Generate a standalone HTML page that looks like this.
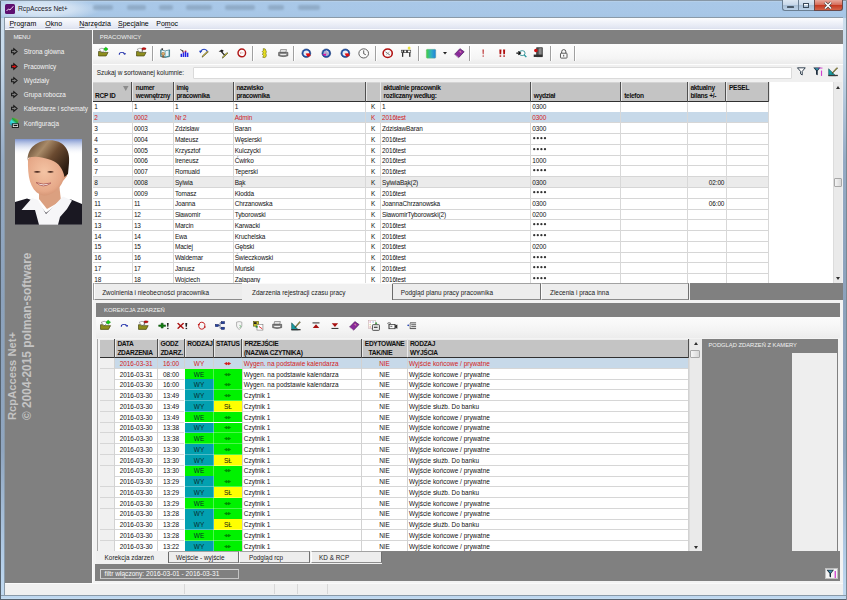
<!DOCTYPE html><html><head><meta charset="utf-8"><style>
*{margin:0;padding:0;box-sizing:border-box}
html,body{width:847px;height:600px;overflow:hidden;background:#b4cde6}
body{position:relative;font-family:"Liberation Sans",sans-serif;font-size:6.5px;color:#000}
.ab{position:absolute}
.t{position:absolute;white-space:nowrap;line-height:1}
u{text-decoration-thickness:0.6px;text-decoration-color:#707080;text-underline-offset:1px}
svg{position:absolute;overflow:visible}
</style></head><body>
<div class="ab" style="left:0.00px;top:0.00px;width:847.00px;height:600.00px;background:#56626e"></div><div class="ab" style="left:1.00px;top:1.00px;width:845.00px;height:598.00px;background:linear-gradient(180deg,#cfe0ee 0,#c6d9ea 60px,#94aac4 160px,#8ca2bc 300px,#90a6c0 450px,#b4cee8 560px,#c4dcf2 600px)"></div><div class="ab" style="left:1.00px;top:594.50px;width:845.00px;height:4.50px;background:linear-gradient(180deg,#8a9aa8 0,#8a9aa8 1px,#c0d8f0 1.2px,#bcd6ee 3px,#d0e4f4 4px,#6a7888 4.5px)"></div><div class="ab" style="left:846.00px;top:0.00px;width:1.00px;height:600.00px;background:#7a8894"></div><div class="ab" style="left:1.00px;top:1.00px;width:845.00px;height:16.50px;background:linear-gradient(180deg,#bad2ea 0,#a9c8e8 1.5px,#a8c7e7 12px,#a6c5e4 16.5px)"></div><div class="ab" style="left:1.00px;top:1.00px;width:100.00px;height:16.00px;background:radial-gradient(ellipse 60px 12px at 40px 8px,rgba(228,238,248,.95) 0,rgba(220,232,245,.75) 55%,rgba(200,220,240,0) 100%)"></div><div class="ab" style="left:0.00px;top:0.00px;width:847.00px;height:1.00px;background:#8797a6"></div><div class="ab" style="left:4.40px;top:17.00px;width:838.60px;height:578.00px;background:#8a9aa8"></div><div class="ab" style="left:93.00px;top:4.60px;width:20.00px;height:5.60px;background:#7890a8;opacity:.5;filter:blur(1.3px);border-radius:2px"></div><div class="ab" style="left:126.60px;top:4.60px;width:19.40px;height:5.60px;background:#7890a8;opacity:.5;filter:blur(1.3px);border-radius:2px"></div><div class="ab" style="left:159.30px;top:4.60px;width:14.20px;height:5.60px;background:#7890a8;opacity:.5;filter:blur(1.3px);border-radius:2px"></div><div class="ab" style="left:186.00px;top:4.60px;width:25.50px;height:5.60px;background:#7890a8;opacity:.5;filter:blur(1.3px);border-radius:2px"></div><div class="ab" style="left:224.80px;top:4.60px;width:30.00px;height:5.60px;background:#7890a8;opacity:.5;filter:blur(1.3px);border-radius:2px"></div><div class="ab" style="left:268.00px;top:4.60px;width:16.00px;height:5.60px;background:#7890a8;opacity:.5;filter:blur(1.3px);border-radius:2px"></div><div class="ab" style="left:298.00px;top:4.60px;width:22.30px;height:5.60px;background:#7890a8;opacity:.5;filter:blur(1.3px);border-radius:2px"></div><svg style="left:5px;top:4px" width="10" height="10" viewBox="0 0 10 10"><rect x="0" y="0" width="10" height="10" rx="1.5" fill="#5e1070"/><polyline points="1.5,7 3.5,5 5,6 7,3.5 8.5,2.5" fill="none" stroke="#f0d8f4" stroke-width="1"/></svg><div class="t" style="left:18.00px;top:5.90px;font-size:6.8px;color:#1a2028;letter-spacing:-0.05px">RcpAccess Net+</div><div class="ab" style="left:781.60px;top:0.00px;width:17.00px;height:11.30px;border:1px solid #6a7f93;border-top:none;border-right:none;border-radius:0 0 0 3px;background:linear-gradient(180deg,#dde8f3 0,#c9d9ea 45%,#a9c0d7 55%,#bcd2e8 100%)"></div><div class="ab" style="left:798.40px;top:0.00px;width:15.80px;height:11.30px;border:1px solid #6a7f93;border-top:none;border-right:none;background:linear-gradient(180deg,#dde8f3 0,#c9d9ea 45%,#a9c0d7 55%,#bcd2e8 100%)"></div><div class="ab" style="left:814.00px;top:0.00px;width:28.50px;height:11.30px;border:1px solid #6a4a4a;border-top:none;border-radius:0 0 3px 0;background:linear-gradient(180deg,#e9a99c 0,#d7705e 45%,#c53a22 55%,#d5654a 100%)"></div><div class="ab" style="left:787.00px;top:5.50px;width:7.00px;height:2.20px;background:#fff;border:0.6px solid #4a5a6a;border-radius:0.5px"></div><div class="ab" style="left:803.00px;top:2.50px;width:6.00px;height:5.50px;border:0.8px solid #3a4a5a;background:transparent;box-shadow:inset 0 1.2px 0 #fff"></div><svg style="left:824px;top:2px" width="8" height="7" viewBox="0 0 8 7"><path d="M1 0.5 L7 6.5 M7 0.5 L1 6.5" stroke="#404040" stroke-width="2.6"/><path d="M1 0.5 L7 6.5 M7 0.5 L1 6.5" stroke="#fff" stroke-width="1.6"/></svg><div class="ab" style="left:5.00px;top:17.50px;width:837.50px;height:577.00px;background:#f0f0f0"></div><div class="ab" style="left:5.00px;top:17.50px;width:837.50px;height:12.20px;background:linear-gradient(180deg,#fcfdfe 0,#f2f4fa 30%,#e2e6f2 80%,#dde1ee 88%,#fbfcfe 92%,#fbfcfe 100%)"></div><div class="t" style="left:9.40px;top:20.00px;font-size:7.0px;color:#000"><u>P</u>rogram</div><div class="t" style="left:45.30px;top:20.00px;font-size:7.0px;color:#000"><u>O</u>kno</div><div class="t" style="left:79.30px;top:20.00px;font-size:7.0px;color:#000"><u>N</u>arzędzia</div><div class="t" style="left:118.00px;top:20.00px;font-size:7.0px;color:#000"><u>S</u>pecjalne</div><div class="t" style="left:156.30px;top:20.00px;font-size:7.0px;color:#000">Po<u>m</u>oc</div><div class="ab" style="left:5.00px;top:29.70px;width:86.80px;height:553.10px;background:#808080"></div><div class="t" style="left:13.40px;top:34.30px;font-size:6.0px;color:#f2f2f2;letter-spacing:-0.15px">MENU</div><svg style="left:10.6px;top:48.199999999999996px" width="6.6" height="7" viewBox="0 0 6.6 7"><path d="M0.6 2.3 H2.8 V0.6 L6.1 3.5 L2.8 6.4 V4.7 H0.6 Z" fill="#808080" stroke="#151515" stroke-width="1.05" stroke-linejoin="miter"/></svg><div class="t" style="left:23.80px;top:49.20px;font-size:6.35px;color:#f4f4f4">Strona główna</div><svg style="left:10.6px;top:62.699999999999996px" width="6.6" height="7" viewBox="0 0 6.6 7"><path d="M0.6 2.3 H2.8 V0.6 L6.1 3.5 L2.8 6.4 V4.7 H0.6 Z" fill="#e01010" stroke="#151515" stroke-width="1.05" stroke-linejoin="miter"/></svg><div class="t" style="left:23.80px;top:63.70px;font-size:6.35px;color:#f4f4f4">Pracownicy</div><svg style="left:10.6px;top:76.80000000000001px" width="6.6" height="7" viewBox="0 0 6.6 7"><path d="M0.6 2.3 H2.8 V0.6 L6.1 3.5 L2.8 6.4 V4.7 H0.6 Z" fill="#808080" stroke="#151515" stroke-width="1.05" stroke-linejoin="miter"/></svg><div class="t" style="left:23.80px;top:77.80px;font-size:6.35px;color:#f4f4f4">Wydziały</div><svg style="left:10.6px;top:90.7px" width="6.6" height="7" viewBox="0 0 6.6 7"><path d="M0.6 2.3 H2.8 V0.6 L6.1 3.5 L2.8 6.4 V4.7 H0.6 Z" fill="#808080" stroke="#151515" stroke-width="1.05" stroke-linejoin="miter"/></svg><div class="t" style="left:23.80px;top:91.70px;font-size:6.35px;color:#f4f4f4">Grupa robocza</div><svg style="left:10.6px;top:105.2px" width="6.6" height="7" viewBox="0 0 6.6 7"><path d="M0.6 2.3 H2.8 V0.6 L6.1 3.5 L2.8 6.4 V4.7 H0.6 Z" fill="#808080" stroke="#151515" stroke-width="1.05" stroke-linejoin="miter"/></svg><div class="t" style="left:23.80px;top:106.20px;font-size:6.35px;color:#f4f4f4">Kalendarze i schematy</div><svg style="left:9px;top:117.2px" width="10" height="10.8" viewBox="0 0 10 10.8"><defs><linearGradient id="kg" x1="0" y1="1" x2="1" y2="0"><stop offset="0" stop-color="#1890b0"/><stop offset="0.4" stop-color="#40e0e0"/><stop offset="0.6" stop-color="#20a040"/><stop offset="1" stop-color="#c8b820"/></linearGradient></defs><path d="M0.3 6 L3.5 0.5 L6 1.2 L9.6 3 L9 6 L6 8.5 L2 8.5Z" fill="url(#kg)"/><rect x="3.3" y="6.8" width="6.2" height="3.7" fill="#f4f4f4" stroke="#101010" stroke-width="0.9"/><rect x="4.6" y="7.9" width="3.8" height="1.3" fill="#101010"/></svg><div class="t" style="left:23.80px;top:120.60px;font-size:6.35px;color:#f4f4f4">Konfiguracja</div><svg style="left:14.8px;top:138.8px" width="67" height="85.8" viewBox="0 0 67 85.8">
<defs><radialGradient id="bgp" cx="0.5" cy="0.05" r="0.6" fx="0.5" fy="0.1"><stop offset="0" stop-color="#ffffff"/><stop offset="0.5" stop-color="#f4f6fb"/><stop offset="1" stop-color="#ffffff"/></radialGradient>
<linearGradient id="bgt" x1="0" y1="0" x2="0" y2="1"><stop offset="0" stop-color="#7f96d0" stop-opacity="1"/><stop offset="1" stop-color="#ffffff" stop-opacity="0"/></linearGradient>
<linearGradient id="hair" x1="0" y1="0" x2="1" y2="0.7"><stop offset="0" stop-color="#4a3220"/><stop offset="0.35" stop-color="#a88a68"/><stop offset="0.6" stop-color="#6a4a30"/><stop offset="1" stop-color="#2a1a10"/></linearGradient>
<radialGradient id="skin" cx="0.42" cy="0.45" r="0.65"><stop offset="0" stop-color="#f4c4a4"/><stop offset="0.7" stop-color="#e6a888"/><stop offset="1" stop-color="#c88868"/></radialGradient></defs>
<rect width="67" height="85.8" fill="#fff"/>
<rect width="67" height="16" fill="url(#bgt)"/>
<path d="M24 46 L44 44 L46 62 L32 70 L24 60 Z" fill="#dba080"/>
<path d="M13 20 C12.5 38 15 50 25 55.5 C33 59 44 52 48 42 L52 37 L52 24 C45 12 24 10 13 20Z" fill="url(#skin)"/>
<path d="M12.6 22 C12 8 23 1.2 35 1.2 C48 1.2 55.5 10 54 24 L53 35 L49.5 38 C48 30 44 24 36 21 C28 18.5 20 16.5 13 19Z" fill="url(#hair)"/>
<path d="M0 63 L12 59.5 L22 63 L31 74 L45 63 L56 60.5 L67 65 V85.8 H0Z" fill="#1a1822"/>
<path d="M6.5 71 L17 59 L23 61 L31 75 L44 61.5 L48 57.5 L57 61.5 L52 70 L45 78 L43 85.8 L24 85.8 L20 71 Z" fill="#f6f6f8"/>
<path d="M18.5 33 Q22 31 26 33 Q22 34.3 18.5 33Z" fill="#4a2a20"/><path d="M32 33 Q35.5 31 39 33 Q35.5 34.3 32 33Z" fill="#4a2a20"/>
<path d="M21 43.5 Q28 50 36 44 Q28 46.5 21 43.5Z" fill="#fff" stroke="#b0605a" stroke-width="0.9"/>
</svg><div class="t" style="left:7px;top:420px;transform-origin:0 0;transform:rotate(-90deg);font-size:11.2px;font-weight:bold;color:#c4c4c4;height:10px;line-height:10px">RcpAccess Net+</div><div class="t" style="left:21.6px;top:420px;transform-origin:0 0;transform:rotate(-90deg);font-size:11.9px;font-weight:bold;color:#c4c4c4;height:10px;line-height:10px">© 2004-2015 polman-software</div><div class="ab" style="left:5.00px;top:582.80px;width:837.50px;height:11.70px;background:#f0f0f0;border-top:1px solid #fafafa"></div><div class="ab" style="left:183.60px;top:584.00px;width:0.80px;height:10.00px;background:#d8d8d8"></div><div class="ab" style="left:273.60px;top:584.00px;width:0.80px;height:10.00px;background:#d8d8d8"></div><div class="ab" style="left:297.00px;top:584.00px;width:0.80px;height:10.00px;background:#d8d8d8"></div><div class="ab" style="left:326.60px;top:584.00px;width:0.80px;height:10.00px;background:#d8d8d8"></div><div class="ab" style="left:91.80px;top:29.70px;width:1.20px;height:553.00px;background:#fbfbfb"></div><div class="ab" style="left:93.00px;top:29.70px;width:749.50px;height:14.00px;background:#808080"></div><div class="t" style="left:99.70px;top:34.10px;font-size:6.05px;color:#f0f0f0">PRACOWNICY</div><div class="ab" style="left:93.00px;top:43.70px;width:749.50px;height:20.00px;background:linear-gradient(180deg,#fdfdfd 0,#f5f5f5 70%,#ebebeb 100%)"></div><div class="ab" style="left:93.00px;top:63.70px;width:749.50px;height:18.00px;background:#f0f0f0;border-top:1px solid #fdfdfd"></div><div class="t" style="left:96.70px;top:70.30px;font-size:6.4px;color:#202020">Szukaj w sortowanej kolumnie:</div><div class="ab" style="left:193.00px;top:66.60px;width:599.00px;height:12.30px;background:#fff;border:0.7px solid #dadada;border-radius:1px"></div><div class="ab" style="left:93.00px;top:81.50px;width:740.00px;height:201.50px;background:#fff"></div><div class="ab" style="left:93.00px;top:81.70px;width:675.70px;height:20.10px;background:#c4c4c4;border-top:0.6px solid #d4d4d4;border-bottom:1px solid #303030"></div><div class="ab" style="left:131.40px;top:81.70px;width:0.90px;height:20.10px;background:#505050"></div><div class="ab" style="left:132.30px;top:81.70px;width:0.60px;height:19.10px;background:#e8e8e8"></div><div class="ab" style="left:172.80px;top:81.70px;width:0.90px;height:20.10px;background:#505050"></div><div class="ab" style="left:173.70px;top:81.70px;width:0.60px;height:19.10px;background:#e8e8e8"></div><div class="ab" style="left:232.60px;top:81.70px;width:0.90px;height:20.10px;background:#505050"></div><div class="ab" style="left:233.50px;top:81.70px;width:0.60px;height:19.10px;background:#e8e8e8"></div><div class="ab" style="left:364.90px;top:81.70px;width:0.90px;height:20.10px;background:#505050"></div><div class="ab" style="left:365.80px;top:81.70px;width:0.60px;height:19.10px;background:#e8e8e8"></div><div class="ab" style="left:379.50px;top:81.70px;width:0.90px;height:20.10px;background:#505050"></div><div class="ab" style="left:380.40px;top:81.70px;width:0.60px;height:19.10px;background:#e8e8e8"></div><div class="ab" style="left:529.80px;top:81.70px;width:0.90px;height:20.10px;background:#505050"></div><div class="ab" style="left:530.70px;top:81.70px;width:0.60px;height:19.10px;background:#e8e8e8"></div><div class="ab" style="left:619.80px;top:81.70px;width:0.90px;height:20.10px;background:#505050"></div><div class="ab" style="left:620.70px;top:81.70px;width:0.60px;height:19.10px;background:#e8e8e8"></div><div class="ab" style="left:686.70px;top:81.70px;width:0.90px;height:20.10px;background:#505050"></div><div class="ab" style="left:687.60px;top:81.70px;width:0.60px;height:19.10px;background:#e8e8e8"></div><div class="ab" style="left:725.40px;top:81.70px;width:0.90px;height:20.10px;background:#505050"></div><div class="ab" style="left:726.30px;top:81.70px;width:0.60px;height:19.10px;background:#e8e8e8"></div><div class="ab" style="left:767.80px;top:81.70px;width:0.90px;height:20.10px;background:#505050"></div><div class="ab" style="left:768.70px;top:81.70px;width:0.60px;height:19.10px;background:#e8e8e8"></div><div class="t" style="left:95.00px;top:93.20px;font-size:6.6px;font-weight:bold;color:#101010;letter-spacing:-0.3px">RCP ID</div><svg style="left:123px;top:85.5px" width="5.5" height="5" viewBox="0 0 5.5 5"><path d="M0 0 H5.5 L2.75 5Z" fill="#8a8a8a"/></svg><div class="t" style="left:135.70px;top:85.20px;font-size:6.6px;font-weight:bold;color:#101010;letter-spacing:-0.3px">numer</div><div class="t" style="left:135.70px;top:93.20px;font-size:6.6px;font-weight:bold;color:#101010;letter-spacing:-0.3px">wewnętrzny</div><div class="t" style="left:176.40px;top:85.20px;font-size:6.6px;font-weight:bold;color:#101010;letter-spacing:-0.3px">imię</div><div class="t" style="left:176.40px;top:93.20px;font-size:6.6px;font-weight:bold;color:#101010;letter-spacing:-0.3px">pracownika</div><div class="t" style="left:236.40px;top:85.20px;font-size:6.6px;font-weight:bold;color:#101010;letter-spacing:-0.3px">nazwisko</div><div class="t" style="left:236.40px;top:93.20px;font-size:6.6px;font-weight:bold;color:#101010;letter-spacing:-0.3px">pracownika</div><div class="t" style="left:383.40px;top:85.20px;font-size:6.6px;font-weight:bold;color:#101010;letter-spacing:-0.3px">aktualnie pracownik</div><div class="t" style="left:383.40px;top:93.20px;font-size:6.6px;font-weight:bold;color:#101010;letter-spacing:-0.3px">rozliczany według:</div><div class="t" style="left:533.80px;top:93.20px;font-size:6.6px;font-weight:bold;color:#101010;letter-spacing:-0.3px">wydział</div><div class="t" style="left:624.20px;top:93.20px;font-size:6.6px;font-weight:bold;color:#101010;letter-spacing:-0.3px">telefon</div><div class="t" style="left:690.40px;top:85.20px;font-size:6.6px;font-weight:bold;color:#101010;letter-spacing:-0.3px">aktualny</div><div class="t" style="left:690.40px;top:93.20px;font-size:6.6px;font-weight:bold;color:#101010;letter-spacing:-0.3px">bilans +/-</div><div class="t" style="left:729.00px;top:85.20px;font-size:6.6px;font-weight:bold;color:#101010;letter-spacing:-0.3px">PESEL</div><div class="ab" style="left:93.00px;top:111.60px;width:675.70px;height:0.80px;background:#d6d6d6"></div><div class="t" style="left:94.20px;top:104.43px;font-size:6.45px;letter-spacing:-0.12px;color:#101010">1</div><div class="t" style="left:133.90px;top:104.43px;font-size:6.45px;letter-spacing:-0.12px;color:#101010">1</div><div class="t" style="left:174.90px;top:104.43px;font-size:6.45px;letter-spacing:-0.12px;color:#101010">1</div><div class="t" style="left:234.70px;top:104.43px;font-size:6.45px;letter-spacing:-0.12px;color:#101010">1</div><div class="t" style="left:365.80px;width:14.60px;text-align:center;top:104.43px;font-size:6.45px;letter-spacing:-0.12px;color:#101010">K</div><div class="t" style="left:382.00px;top:104.43px;font-size:6.45px;letter-spacing:-0.12px;color:#101010">1</div><div class="t" style="left:532.30px;top:104.43px;font-size:6.45px;letter-spacing:-0.12px;color:#101010">0300</div><div class="ab" style="left:93.00px;top:112.40px;width:675.70px;height:10.77px;background:#c7d9e9"></div><div class="ab" style="left:93.00px;top:122.37px;width:675.70px;height:0.80px;background:#d6d6d6"></div><div class="t" style="left:94.20px;top:115.20px;font-size:6.45px;letter-spacing:-0.12px;color:#d42020">2</div><div class="t" style="left:133.90px;top:115.20px;font-size:6.45px;letter-spacing:-0.12px;color:#d42020">0002</div><div class="t" style="left:174.90px;top:115.20px;font-size:6.45px;letter-spacing:-0.12px;color:#d42020">Nr 2</div><div class="t" style="left:234.70px;top:115.20px;font-size:6.45px;letter-spacing:-0.12px;color:#d42020">Admin</div><div class="t" style="left:365.80px;width:14.60px;text-align:center;top:115.20px;font-size:6.45px;letter-spacing:-0.12px;color:#d42020">K</div><div class="t" style="left:382.00px;top:115.20px;font-size:6.45px;letter-spacing:-0.12px;color:#d42020">2016test</div><div class="t" style="left:532.30px;top:115.20px;font-size:6.45px;letter-spacing:-0.12px;color:#d42020">0300</div><div class="ab" style="left:93.00px;top:133.14px;width:675.70px;height:0.80px;background:#d6d6d6"></div><div class="t" style="left:94.20px;top:125.97px;font-size:6.45px;letter-spacing:-0.12px;color:#101010">3</div><div class="t" style="left:133.90px;top:125.97px;font-size:6.45px;letter-spacing:-0.12px;color:#101010">0003</div><div class="t" style="left:174.90px;top:125.97px;font-size:6.45px;letter-spacing:-0.12px;color:#101010">Zdzisław</div><div class="t" style="left:234.70px;top:125.97px;font-size:6.45px;letter-spacing:-0.12px;color:#101010">Baran</div><div class="t" style="left:365.80px;width:14.60px;text-align:center;top:125.97px;font-size:6.45px;letter-spacing:-0.12px;color:#101010">K</div><div class="t" style="left:382.00px;top:125.97px;font-size:6.45px;letter-spacing:-0.12px;color:#101010">ZdzisławBaran</div><div class="t" style="left:532.30px;top:125.97px;font-size:6.45px;letter-spacing:-0.12px;color:#101010">0300</div><div class="ab" style="left:93.00px;top:143.91px;width:675.70px;height:0.80px;background:#d6d6d6"></div><div class="t" style="left:94.20px;top:136.74px;font-size:6.45px;letter-spacing:-0.12px;color:#101010">4</div><div class="t" style="left:133.90px;top:136.74px;font-size:6.45px;letter-spacing:-0.12px;color:#101010">0004</div><div class="t" style="left:174.90px;top:136.74px;font-size:6.45px;letter-spacing:-0.12px;color:#101010">Mateusz</div><div class="t" style="left:234.70px;top:136.74px;font-size:6.45px;letter-spacing:-0.12px;color:#101010">Węsierski</div><div class="t" style="left:365.80px;width:14.60px;text-align:center;top:136.74px;font-size:6.45px;letter-spacing:-0.12px;color:#101010">K</div><div class="t" style="left:382.00px;top:136.74px;font-size:6.45px;letter-spacing:-0.12px;color:#101010">2016test</div><svg style="left:532.60px;top:137.14px" width="14" height="2.6" viewBox="0 0 14 2.6"><g fill="#333"><circle cx="1.2" cy="1.2" r="1.15"/><circle cx="4.8" cy="1.2" r="1.15"/><circle cx="8.4" cy="1.2" r="1.15"/><circle cx="12" cy="1.2" r="1.15"/></g></svg><div class="ab" style="left:93.00px;top:154.68px;width:675.70px;height:0.80px;background:#d6d6d6"></div><div class="t" style="left:94.20px;top:147.51px;font-size:6.45px;letter-spacing:-0.12px;color:#101010">5</div><div class="t" style="left:133.90px;top:147.51px;font-size:6.45px;letter-spacing:-0.12px;color:#101010">0005</div><div class="t" style="left:174.90px;top:147.51px;font-size:6.45px;letter-spacing:-0.12px;color:#101010">Krzysztof</div><div class="t" style="left:234.70px;top:147.51px;font-size:6.45px;letter-spacing:-0.12px;color:#101010">Kulczycki</div><div class="t" style="left:365.80px;width:14.60px;text-align:center;top:147.51px;font-size:6.45px;letter-spacing:-0.12px;color:#101010">K</div><div class="t" style="left:382.00px;top:147.51px;font-size:6.45px;letter-spacing:-0.12px;color:#101010">2016test</div><svg style="left:532.60px;top:147.91px" width="14" height="2.6" viewBox="0 0 14 2.6"><g fill="#333"><circle cx="1.2" cy="1.2" r="1.15"/><circle cx="4.8" cy="1.2" r="1.15"/><circle cx="8.4" cy="1.2" r="1.15"/><circle cx="12" cy="1.2" r="1.15"/></g></svg><div class="ab" style="left:93.00px;top:165.45px;width:675.70px;height:0.80px;background:#d6d6d6"></div><div class="t" style="left:94.20px;top:158.28px;font-size:6.45px;letter-spacing:-0.12px;color:#101010">6</div><div class="t" style="left:133.90px;top:158.28px;font-size:6.45px;letter-spacing:-0.12px;color:#101010">0006</div><div class="t" style="left:174.90px;top:158.28px;font-size:6.45px;letter-spacing:-0.12px;color:#101010">Ireneusz</div><div class="t" style="left:234.70px;top:158.28px;font-size:6.45px;letter-spacing:-0.12px;color:#101010">Ćwirko</div><div class="t" style="left:365.80px;width:14.60px;text-align:center;top:158.28px;font-size:6.45px;letter-spacing:-0.12px;color:#101010">K</div><div class="t" style="left:382.00px;top:158.28px;font-size:6.45px;letter-spacing:-0.12px;color:#101010">2016test</div><div class="t" style="left:532.30px;top:158.28px;font-size:6.45px;letter-spacing:-0.12px;color:#101010">1000</div><div class="ab" style="left:93.00px;top:176.22px;width:675.70px;height:0.80px;background:#d6d6d6"></div><div class="t" style="left:94.20px;top:169.05px;font-size:6.45px;letter-spacing:-0.12px;color:#101010">7</div><div class="t" style="left:133.90px;top:169.05px;font-size:6.45px;letter-spacing:-0.12px;color:#101010">0007</div><div class="t" style="left:174.90px;top:169.05px;font-size:6.45px;letter-spacing:-0.12px;color:#101010">Romuald</div><div class="t" style="left:234.70px;top:169.05px;font-size:6.45px;letter-spacing:-0.12px;color:#101010">Teperski</div><div class="t" style="left:365.80px;width:14.60px;text-align:center;top:169.05px;font-size:6.45px;letter-spacing:-0.12px;color:#101010">K</div><div class="t" style="left:382.00px;top:169.05px;font-size:6.45px;letter-spacing:-0.12px;color:#101010">2016test</div><svg style="left:532.60px;top:169.45px" width="14" height="2.6" viewBox="0 0 14 2.6"><g fill="#333"><circle cx="1.2" cy="1.2" r="1.15"/><circle cx="4.8" cy="1.2" r="1.15"/><circle cx="8.4" cy="1.2" r="1.15"/><circle cx="12" cy="1.2" r="1.15"/></g></svg><div class="ab" style="left:93.00px;top:177.02px;width:675.70px;height:10.77px;background:#ebebeb"></div><div class="ab" style="left:93.00px;top:186.99px;width:675.70px;height:0.80px;background:#d6d6d6"></div><div class="t" style="left:94.20px;top:179.82px;font-size:6.45px;letter-spacing:-0.12px;color:#101010">8</div><div class="t" style="left:133.90px;top:179.82px;font-size:6.45px;letter-spacing:-0.12px;color:#101010">0008</div><div class="t" style="left:174.90px;top:179.82px;font-size:6.45px;letter-spacing:-0.12px;color:#101010">Sylwia</div><div class="t" style="left:234.70px;top:179.82px;font-size:6.45px;letter-spacing:-0.12px;color:#101010">Bąk</div><div class="t" style="left:365.80px;width:14.60px;text-align:center;top:179.82px;font-size:6.45px;letter-spacing:-0.12px;color:#101010">K</div><div class="t" style="left:382.00px;top:179.82px;font-size:6.45px;letter-spacing:-0.12px;color:#101010">SylwiaBąk(2)</div><div class="t" style="left:532.30px;top:179.82px;font-size:6.45px;letter-spacing:-0.12px;color:#101010">0300</div><div class="t" style="right:122.70px;top:179.82px;font-size:6.45px;letter-spacing:-0.12px;color:#101010">02:00</div><div class="ab" style="left:93.00px;top:197.76px;width:675.70px;height:0.80px;background:#d6d6d6"></div><div class="t" style="left:94.20px;top:190.59px;font-size:6.45px;letter-spacing:-0.12px;color:#101010">9</div><div class="t" style="left:133.90px;top:190.59px;font-size:6.45px;letter-spacing:-0.12px;color:#101010">0009</div><div class="t" style="left:174.90px;top:190.59px;font-size:6.45px;letter-spacing:-0.12px;color:#101010">Tomasz</div><div class="t" style="left:234.70px;top:190.59px;font-size:6.45px;letter-spacing:-0.12px;color:#101010">Kłodda</div><div class="t" style="left:365.80px;width:14.60px;text-align:center;top:190.59px;font-size:6.45px;letter-spacing:-0.12px;color:#101010">K</div><div class="t" style="left:382.00px;top:190.59px;font-size:6.45px;letter-spacing:-0.12px;color:#101010">2016test</div><svg style="left:532.60px;top:190.99px" width="14" height="2.6" viewBox="0 0 14 2.6"><g fill="#333"><circle cx="1.2" cy="1.2" r="1.15"/><circle cx="4.8" cy="1.2" r="1.15"/><circle cx="8.4" cy="1.2" r="1.15"/><circle cx="12" cy="1.2" r="1.15"/></g></svg><div class="ab" style="left:93.00px;top:208.53px;width:675.70px;height:0.80px;background:#d6d6d6"></div><div class="t" style="left:94.20px;top:201.36px;font-size:6.45px;letter-spacing:-0.12px;color:#101010">11</div><div class="t" style="left:133.90px;top:201.36px;font-size:6.45px;letter-spacing:-0.12px;color:#101010">11</div><div class="t" style="left:174.90px;top:201.36px;font-size:6.45px;letter-spacing:-0.12px;color:#101010">Joanna</div><div class="t" style="left:234.70px;top:201.36px;font-size:6.45px;letter-spacing:-0.12px;color:#101010">Chrzanowska</div><div class="t" style="left:365.80px;width:14.60px;text-align:center;top:201.36px;font-size:6.45px;letter-spacing:-0.12px;color:#101010">K</div><div class="t" style="left:382.00px;top:201.36px;font-size:6.45px;letter-spacing:-0.12px;color:#101010">JoannaChrzanowska</div><div class="t" style="left:532.30px;top:201.36px;font-size:6.45px;letter-spacing:-0.12px;color:#101010">0300</div><div class="t" style="right:122.70px;top:201.36px;font-size:6.45px;letter-spacing:-0.12px;color:#101010">06:00</div><div class="ab" style="left:93.00px;top:219.30px;width:675.70px;height:0.80px;background:#d6d6d6"></div><div class="t" style="left:94.20px;top:212.13px;font-size:6.45px;letter-spacing:-0.12px;color:#101010">12</div><div class="t" style="left:133.90px;top:212.13px;font-size:6.45px;letter-spacing:-0.12px;color:#101010">12</div><div class="t" style="left:174.90px;top:212.13px;font-size:6.45px;letter-spacing:-0.12px;color:#101010">Sławomir</div><div class="t" style="left:234.70px;top:212.13px;font-size:6.45px;letter-spacing:-0.12px;color:#101010">Tyborowski</div><div class="t" style="left:365.80px;width:14.60px;text-align:center;top:212.13px;font-size:6.45px;letter-spacing:-0.12px;color:#101010">K</div><div class="t" style="left:382.00px;top:212.13px;font-size:6.45px;letter-spacing:-0.12px;color:#101010">SławomirTyborowski(2)</div><div class="t" style="left:532.30px;top:212.13px;font-size:6.45px;letter-spacing:-0.12px;color:#101010">0200</div><div class="ab" style="left:93.00px;top:230.07px;width:675.70px;height:0.80px;background:#d6d6d6"></div><div class="t" style="left:94.20px;top:222.90px;font-size:6.45px;letter-spacing:-0.12px;color:#101010">13</div><div class="t" style="left:133.90px;top:222.90px;font-size:6.45px;letter-spacing:-0.12px;color:#101010">13</div><div class="t" style="left:174.90px;top:222.90px;font-size:6.45px;letter-spacing:-0.12px;color:#101010">Marcin</div><div class="t" style="left:234.70px;top:222.90px;font-size:6.45px;letter-spacing:-0.12px;color:#101010">Karwacki</div><div class="t" style="left:365.80px;width:14.60px;text-align:center;top:222.90px;font-size:6.45px;letter-spacing:-0.12px;color:#101010">K</div><div class="t" style="left:382.00px;top:222.90px;font-size:6.45px;letter-spacing:-0.12px;color:#101010">2016test</div><svg style="left:532.60px;top:223.30px" width="14" height="2.6" viewBox="0 0 14 2.6"><g fill="#333"><circle cx="1.2" cy="1.2" r="1.15"/><circle cx="4.8" cy="1.2" r="1.15"/><circle cx="8.4" cy="1.2" r="1.15"/><circle cx="12" cy="1.2" r="1.15"/></g></svg><div class="ab" style="left:93.00px;top:240.84px;width:675.70px;height:0.80px;background:#d6d6d6"></div><div class="t" style="left:94.20px;top:233.67px;font-size:6.45px;letter-spacing:-0.12px;color:#101010">14</div><div class="t" style="left:133.90px;top:233.67px;font-size:6.45px;letter-spacing:-0.12px;color:#101010">14</div><div class="t" style="left:174.90px;top:233.67px;font-size:6.45px;letter-spacing:-0.12px;color:#101010">Ewa</div><div class="t" style="left:234.70px;top:233.67px;font-size:6.45px;letter-spacing:-0.12px;color:#101010">Kruchelska</div><div class="t" style="left:365.80px;width:14.60px;text-align:center;top:233.67px;font-size:6.45px;letter-spacing:-0.12px;color:#101010">K</div><div class="t" style="left:382.00px;top:233.67px;font-size:6.45px;letter-spacing:-0.12px;color:#101010">2016test</div><svg style="left:532.60px;top:234.07px" width="14" height="2.6" viewBox="0 0 14 2.6"><g fill="#333"><circle cx="1.2" cy="1.2" r="1.15"/><circle cx="4.8" cy="1.2" r="1.15"/><circle cx="8.4" cy="1.2" r="1.15"/><circle cx="12" cy="1.2" r="1.15"/></g></svg><div class="ab" style="left:93.00px;top:251.61px;width:675.70px;height:0.80px;background:#d6d6d6"></div><div class="t" style="left:94.20px;top:244.44px;font-size:6.45px;letter-spacing:-0.12px;color:#101010">15</div><div class="t" style="left:133.90px;top:244.44px;font-size:6.45px;letter-spacing:-0.12px;color:#101010">15</div><div class="t" style="left:174.90px;top:244.44px;font-size:6.45px;letter-spacing:-0.12px;color:#101010">Maciej</div><div class="t" style="left:234.70px;top:244.44px;font-size:6.45px;letter-spacing:-0.12px;color:#101010">Gębski</div><div class="t" style="left:365.80px;width:14.60px;text-align:center;top:244.44px;font-size:6.45px;letter-spacing:-0.12px;color:#101010">K</div><div class="t" style="left:382.00px;top:244.44px;font-size:6.45px;letter-spacing:-0.12px;color:#101010">2016test</div><div class="t" style="left:532.30px;top:244.44px;font-size:6.45px;letter-spacing:-0.12px;color:#101010">0200</div><div class="ab" style="left:93.00px;top:262.38px;width:675.70px;height:0.80px;background:#d6d6d6"></div><div class="t" style="left:94.20px;top:255.21px;font-size:6.45px;letter-spacing:-0.12px;color:#101010">16</div><div class="t" style="left:133.90px;top:255.21px;font-size:6.45px;letter-spacing:-0.12px;color:#101010">16</div><div class="t" style="left:174.90px;top:255.21px;font-size:6.45px;letter-spacing:-0.12px;color:#101010">Waldemar</div><div class="t" style="left:234.70px;top:255.21px;font-size:6.45px;letter-spacing:-0.12px;color:#101010">Świeczkowski</div><div class="t" style="left:365.80px;width:14.60px;text-align:center;top:255.21px;font-size:6.45px;letter-spacing:-0.12px;color:#101010">K</div><div class="t" style="left:382.00px;top:255.21px;font-size:6.45px;letter-spacing:-0.12px;color:#101010">2016test</div><svg style="left:532.60px;top:255.61px" width="14" height="2.6" viewBox="0 0 14 2.6"><g fill="#333"><circle cx="1.2" cy="1.2" r="1.15"/><circle cx="4.8" cy="1.2" r="1.15"/><circle cx="8.4" cy="1.2" r="1.15"/><circle cx="12" cy="1.2" r="1.15"/></g></svg><div class="ab" style="left:93.00px;top:273.15px;width:675.70px;height:0.80px;background:#d6d6d6"></div><div class="t" style="left:94.20px;top:265.98px;font-size:6.45px;letter-spacing:-0.12px;color:#101010">17</div><div class="t" style="left:133.90px;top:265.98px;font-size:6.45px;letter-spacing:-0.12px;color:#101010">17</div><div class="t" style="left:174.90px;top:265.98px;font-size:6.45px;letter-spacing:-0.12px;color:#101010">Janusz</div><div class="t" style="left:234.70px;top:265.98px;font-size:6.45px;letter-spacing:-0.12px;color:#101010">Muński</div><div class="t" style="left:365.80px;width:14.60px;text-align:center;top:265.98px;font-size:6.45px;letter-spacing:-0.12px;color:#101010">K</div><div class="t" style="left:382.00px;top:265.98px;font-size:6.45px;letter-spacing:-0.12px;color:#101010">2016test</div><svg style="left:532.60px;top:266.38px" width="14" height="2.6" viewBox="0 0 14 2.6"><g fill="#333"><circle cx="1.2" cy="1.2" r="1.15"/><circle cx="4.8" cy="1.2" r="1.15"/><circle cx="8.4" cy="1.2" r="1.15"/><circle cx="12" cy="1.2" r="1.15"/></g></svg><div class="ab" style="left:93.00px;top:283.92px;width:675.70px;height:0.80px;background:#d6d6d6"></div><div class="t" style="left:94.20px;top:276.75px;font-size:6.45px;letter-spacing:-0.12px;color:#101010">18</div><div class="t" style="left:133.90px;top:276.75px;font-size:6.45px;letter-spacing:-0.12px;color:#101010">18</div><div class="t" style="left:174.90px;top:276.75px;font-size:6.45px;letter-spacing:-0.12px;color:#101010">Wojciech</div><div class="t" style="left:234.70px;top:276.75px;font-size:6.45px;letter-spacing:-0.12px;color:#101010">Zalapany</div><div class="t" style="left:365.80px;width:14.60px;text-align:center;top:276.75px;font-size:6.45px;letter-spacing:-0.12px;color:#101010">K</div><div class="t" style="left:382.00px;top:276.75px;font-size:6.45px;letter-spacing:-0.12px;color:#101010">2016test</div><svg style="left:532.60px;top:277.15px" width="14" height="2.6" viewBox="0 0 14 2.6"><g fill="#333"><circle cx="1.2" cy="1.2" r="1.15"/><circle cx="4.8" cy="1.2" r="1.15"/><circle cx="8.4" cy="1.2" r="1.15"/><circle cx="12" cy="1.2" r="1.15"/></g></svg><div class="ab" style="left:131.60px;top:101.80px;width:0.70px;height:181.50px;background:#d8d8d8"></div><div class="ab" style="left:173.00px;top:101.80px;width:0.70px;height:181.50px;background:#d8d8d8"></div><div class="ab" style="left:232.80px;top:101.80px;width:0.70px;height:181.50px;background:#d8d8d8"></div><div class="ab" style="left:365.10px;top:101.80px;width:0.70px;height:181.50px;background:#d8d8d8"></div><div class="ab" style="left:379.70px;top:101.80px;width:0.70px;height:181.50px;background:#d8d8d8"></div><div class="ab" style="left:530.00px;top:101.80px;width:0.70px;height:181.50px;background:#d8d8d8"></div><div class="ab" style="left:620.00px;top:101.80px;width:0.70px;height:181.50px;background:#d8d8d8"></div><div class="ab" style="left:686.90px;top:101.80px;width:0.70px;height:181.50px;background:#d8d8d8"></div><div class="ab" style="left:725.60px;top:101.80px;width:0.70px;height:181.50px;background:#d8d8d8"></div><div class="ab" style="left:768.00px;top:101.80px;width:0.70px;height:181.50px;background:#d8d8d8"></div><div class="ab" style="left:833.00px;top:81.50px;width:9.00px;height:201.00px;background:#eaeaea;border-left:0.7px solid #dcdcdc"></div><svg style="left:835.5px;top:86px" width="4" height="3" viewBox="0 0 4 3"><path d="M0 3 L2 0 L4 3Z" fill="#303030"/></svg><svg style="left:835.5px;top:277px" width="4" height="3" viewBox="0 0 4 3"><path d="M0 0 L2 3 L4 0Z" fill="#303030"/></svg><div class="ab" style="left:833.50px;top:178.00px;width:8.20px;height:8.70px;background:linear-gradient(90deg,#f4f4f4,#d8d8d8);border:0.7px solid #a8a8a8;border-radius:1px"></div><div class="ab" style="left:93.00px;top:282.80px;width:749.50px;height:17.00px;background:#808080"></div><div class="ab" style="left:93.00px;top:282.80px;width:596.50px;height:17.00px;background:#f0f0f0"></div><div class="ab" style="left:93.00px;top:283.20px;width:1.00px;height:16.60px;background:#a0a0a0"></div><div class="ab" style="left:94.00px;top:283.20px;width:148.00px;height:16.80px;background:#ededed;border-top:1.3px solid #a2a2a2;border-left:0.8px solid #fdfdfd;border-bottom:1.2px solid #8c8c8c"></div><div class="t" style="left:102.20px;top:289.50px;font-size:6.4px;color:#1a1a1a">Zwolnienia i nieobecności pracownika</div><div class="ab" style="left:242.00px;top:283.20px;width:150.30px;height:16.80px;background:#f0f0f0"></div><div class="t" style="left:252.00px;top:289.50px;font-size:6.4px;color:#1a1a1a">Zdarzenia rejestracji czasu pracy</div><div class="ab" style="left:392.30px;top:283.20px;width:148.50px;height:16.80px;background:#ededed;border-top:1.3px solid #a2a2a2;border-left:0.8px solid #fdfdfd;border-right:1px solid #707070;border-bottom:1.2px solid #8c8c8c"></div><div class="t" style="left:400.70px;top:289.50px;font-size:6.4px;color:#1a1a1a">Podgląd planu pracy pracownika</div><div class="ab" style="left:540.80px;top:283.20px;width:148.70px;height:16.80px;background:#ededed;border-top:1.3px solid #a2a2a2;border-left:0.8px solid #fdfdfd;border-right:1px solid #707070;border-bottom:1.2px solid #8c8c8c"></div><div class="t" style="left:550.00px;top:289.50px;font-size:6.4px;color:#1a1a1a">Zlecenia i praca inna</div><div class="ab" style="left:392.10px;top:284.00px;width:1.00px;height:16.00px;background:#6a6a6a"></div><div class="ab" style="left:242.00px;top:283.20px;width:150.30px;height:1.20px;background:#fafafa"></div><div class="ab" style="left:93.00px;top:300.00px;width:749.50px;height:283.00px;background:#f3f3f3"></div><div class="ab" style="left:95.60px;top:303.00px;width:744.60px;height:13.90px;background:#808080"></div><div class="t" style="left:104.00px;top:307.80px;font-size:5.9px;color:#f4f4f4">KOREKCJA ZDARZEŃ</div><div class="ab" style="left:95.60px;top:316.90px;width:744.60px;height:21.60px;background:linear-gradient(180deg,#fcfcfc 0,#f4f4f4 60%,#ececec 100%)"></div><div class="ab" style="left:97.20px;top:338.50px;width:0.80px;height:212.50px;background:#a8a8a8"></div><div class="ab" style="left:99.80px;top:358.00px;width:589.20px;height:193.00px;background:#fff"></div><div class="ab" style="left:99.80px;top:338.50px;width:589.20px;height:19.50px;background:#c4c4c4;border-top:0.6px solid #eeeeee;border-bottom:1.1px solid #303030"></div><div class="ab" style="left:113.70px;top:338.50px;width:0.90px;height:19.50px;background:#505050"></div><div class="ab" style="left:114.60px;top:338.50px;width:0.60px;height:18.50px;background:#e8e8e8"></div><div class="ab" style="left:156.70px;top:338.50px;width:0.90px;height:19.50px;background:#505050"></div><div class="ab" style="left:157.60px;top:338.50px;width:0.60px;height:18.50px;background:#e8e8e8"></div><div class="ab" style="left:183.60px;top:338.50px;width:0.90px;height:19.50px;background:#505050"></div><div class="ab" style="left:184.50px;top:338.50px;width:0.60px;height:18.50px;background:#e8e8e8"></div><div class="ab" style="left:212.60px;top:338.50px;width:0.90px;height:19.50px;background:#505050"></div><div class="ab" style="left:213.50px;top:338.50px;width:0.60px;height:18.50px;background:#e8e8e8"></div><div class="ab" style="left:241.30px;top:338.50px;width:0.90px;height:19.50px;background:#505050"></div><div class="ab" style="left:242.20px;top:338.50px;width:0.60px;height:18.50px;background:#e8e8e8"></div><div class="ab" style="left:360.70px;top:338.50px;width:0.90px;height:19.50px;background:#505050"></div><div class="ab" style="left:361.60px;top:338.50px;width:0.60px;height:18.50px;background:#e8e8e8"></div><div class="ab" style="left:406.50px;top:338.50px;width:0.90px;height:19.50px;background:#505050"></div><div class="ab" style="left:407.40px;top:338.50px;width:0.60px;height:18.50px;background:#e8e8e8"></div><div class="ab" style="left:688.10px;top:338.50px;width:0.90px;height:19.50px;background:#505050"></div><div class="ab" style="left:689.00px;top:338.50px;width:0.60px;height:18.50px;background:#e8e8e8"></div><div class="t" style="left:117.40px;top:341.20px;font-size:6.6px;font-weight:bold;color:#101010;letter-spacing:-0.3px">DATA</div><div class="t" style="left:117.40px;top:349.60px;font-size:6.6px;font-weight:bold;color:#101010;letter-spacing:-0.3px">ZDARZENIA</div><div class="t" style="left:160.40px;top:341.20px;font-size:6.6px;font-weight:bold;color:#101010;letter-spacing:-0.3px">GODZ</div><div class="t" style="left:160.40px;top:349.60px;font-size:6.6px;font-weight:bold;color:#101010;letter-spacing:-0.3px">ZDARZ.</div><div class="t" style="left:187.30px;top:341.20px;font-size:6.6px;font-weight:bold;color:#101010;letter-spacing:-0.3px">RODZAJ</div><div class="t" style="left:216.00px;top:341.20px;font-size:6.6px;font-weight:bold;color:#101010;letter-spacing:-0.3px">STATUS</div><div class="t" style="left:244.50px;top:341.20px;font-size:6.6px;font-weight:bold;color:#101010;letter-spacing:-0.3px">PRZEJŚCIE</div><div class="t" style="left:243.90px;top:349.60px;font-size:6.6px;font-weight:bold;color:#101010;letter-spacing:-0.3px">(NAZWA CZYTNIKA)</div><div class="t" style="left:364.80px;top:341.20px;font-size:6.6px;font-weight:bold;color:#101010;letter-spacing:-0.3px">EDYTOWANE</div><div class="t" style="left:368.60px;top:349.60px;font-size:6.6px;font-weight:bold;color:#101010;letter-spacing:-0.3px">TAK/NIE</div><div class="t" style="left:409.90px;top:341.20px;font-size:6.6px;font-weight:bold;color:#101010;letter-spacing:-0.3px">RODZAJ</div><div class="t" style="left:409.90px;top:349.60px;font-size:6.6px;font-weight:bold;color:#101010;letter-spacing:-0.3px">WYJŚCIA</div><div class="ab" style="left:114.60px;top:358.00px;width:574.40px;height:10.70px;background:#c7d9e9"></div><div class="ab" style="left:99.80px;top:358.00px;width:14.80px;height:10.70px;background:#f0f0f0"></div><div class="ab" style="left:99.80px;top:367.90px;width:589.20px;height:0.80px;background:#d6d6d6"></div><div class="t" style="left:114.60px;width:43.00px;text-align:center;top:360.75px;font-size:6.45px;color:#d42020">2016-03-31</div><div class="t" style="left:157.60px;width:26.90px;text-align:center;top:360.75px;font-size:6.45px;color:#d42020">16:00</div><div class="t" style="left:184.50px;width:29.00px;text-align:center;top:360.75px;font-size:6.45px;color:#d42020">WY</div><svg style="left:224.25px;top:361.75px" width="7.2" height="3.2" viewBox="0 0 7.2 3.2"><path d="M0 1.6 L2.8 0 L3.6 1.2 L4.4 0 L7.2 1.6 L4.4 3.2 L3.6 2 L2.8 3.2Z" fill="#d42020"/></svg><div class="t" style="left:243.80px;top:360.75px;font-size:6.45px;color:#d42020">Wygen. na podstawie kalendarza</div><div class="t" style="left:361.60px;width:45.80px;text-align:center;top:360.75px;font-size:6.45px;color:#d42020">NIE</div><div class="t" style="left:409.00px;top:360.75px;font-size:6.45px;color:#d42020">Wyjście końcowe / prywatne</div><div class="ab" style="left:184.50px;top:368.70px;width:29.00px;height:10.76px;background:#00f200"></div><div class="ab" style="left:213.50px;top:368.70px;width:28.70px;height:10.76px;background:#00f200"></div><div class="ab" style="left:99.80px;top:368.70px;width:14.80px;height:10.76px;background:#f0f0f0"></div><div class="ab" style="left:99.80px;top:378.66px;width:84.70px;height:0.80px;background:#d6d6d6"></div><div class="ab" style="left:242.20px;top:378.66px;width:446.80px;height:0.80px;background:#d6d6d6"></div><div class="ab" style="left:184.50px;top:378.66px;width:57.70px;height:0.90px;background:rgba(255,255,255,.3)"></div><div class="t" style="left:114.60px;width:43.00px;text-align:center;top:371.50px;font-size:6.45px;color:#101010">2016-03-31</div><div class="t" style="left:157.60px;width:26.90px;text-align:center;top:371.50px;font-size:6.45px;color:#101010">08:00</div><div class="t" style="left:184.50px;width:29.00px;text-align:center;top:371.50px;font-size:6.45px;color:#101010;color:#0a2a2a">WE</div><svg style="left:224.25px;top:372.50px" width="7.2" height="3.2" viewBox="0 0 7.2 3.2"><path d="M0 1.6 L2.8 0 L3.6 1.2 L4.4 0 L7.2 1.6 L4.4 3.2 L3.6 2 L2.8 3.2Z" fill="#008a00"/></svg><div class="t" style="left:243.80px;top:371.50px;font-size:6.45px;color:#101010">Wygen. na podstawie kalendarza</div><div class="t" style="left:361.60px;width:45.80px;text-align:center;top:371.50px;font-size:6.45px;color:#101010">NIE</div><div class="t" style="left:409.00px;top:371.50px;font-size:6.45px;color:#101010">Wyjście końcowe / prywatne</div><div class="ab" style="left:184.50px;top:379.46px;width:29.00px;height:10.76px;background:#02a0b0"></div><div class="ab" style="left:213.50px;top:379.46px;width:28.70px;height:10.76px;background:#00f200"></div><div class="ab" style="left:99.80px;top:379.46px;width:14.80px;height:10.76px;background:#f0f0f0"></div><div class="ab" style="left:99.80px;top:389.42px;width:84.70px;height:0.80px;background:#d6d6d6"></div><div class="ab" style="left:242.20px;top:389.42px;width:446.80px;height:0.80px;background:#d6d6d6"></div><div class="ab" style="left:184.50px;top:389.42px;width:57.70px;height:0.90px;background:rgba(255,255,255,.3)"></div><div class="t" style="left:114.60px;width:43.00px;text-align:center;top:382.26px;font-size:6.45px;color:#101010">2016-03-30</div><div class="t" style="left:157.60px;width:26.90px;text-align:center;top:382.26px;font-size:6.45px;color:#101010">16:00</div><div class="t" style="left:184.50px;width:29.00px;text-align:center;top:382.26px;font-size:6.45px;color:#101010;color:#0a2a2a">WY</div><svg style="left:224.25px;top:383.26px" width="7.2" height="3.2" viewBox="0 0 7.2 3.2"><path d="M0 1.6 L2.8 0 L3.6 1.2 L4.4 0 L7.2 1.6 L4.4 3.2 L3.6 2 L2.8 3.2Z" fill="#008a00"/></svg><div class="t" style="left:243.80px;top:382.26px;font-size:6.45px;color:#101010">Wygen. na podstawie kalendarza</div><div class="t" style="left:361.60px;width:45.80px;text-align:center;top:382.26px;font-size:6.45px;color:#101010">NIE</div><div class="t" style="left:409.00px;top:382.26px;font-size:6.45px;color:#101010">Wyjście końcowe / prywatne</div><div class="ab" style="left:184.50px;top:390.22px;width:29.00px;height:10.76px;background:#02a0b0"></div><div class="ab" style="left:213.50px;top:390.22px;width:28.70px;height:10.76px;background:#00f200"></div><div class="ab" style="left:99.80px;top:390.22px;width:14.80px;height:10.76px;background:#f0f0f0"></div><div class="ab" style="left:99.80px;top:400.18px;width:84.70px;height:0.80px;background:#d6d6d6"></div><div class="ab" style="left:242.20px;top:400.18px;width:446.80px;height:0.80px;background:#d6d6d6"></div><div class="ab" style="left:184.50px;top:400.18px;width:57.70px;height:0.90px;background:rgba(255,255,255,.3)"></div><div class="t" style="left:114.60px;width:43.00px;text-align:center;top:393.02px;font-size:6.45px;color:#101010">2016-03-30</div><div class="t" style="left:157.60px;width:26.90px;text-align:center;top:393.02px;font-size:6.45px;color:#101010">13:49</div><div class="t" style="left:184.50px;width:29.00px;text-align:center;top:393.02px;font-size:6.45px;color:#101010;color:#0a2a2a">WY</div><svg style="left:224.25px;top:394.02px" width="7.2" height="3.2" viewBox="0 0 7.2 3.2"><path d="M0 1.6 L2.8 0 L3.6 1.2 L4.4 0 L7.2 1.6 L4.4 3.2 L3.6 2 L2.8 3.2Z" fill="#008a00"/></svg><div class="t" style="left:243.80px;top:393.02px;font-size:6.45px;color:#101010">Czytnik 1</div><div class="t" style="left:361.60px;width:45.80px;text-align:center;top:393.02px;font-size:6.45px;color:#101010">NIE</div><div class="t" style="left:409.00px;top:393.02px;font-size:6.45px;color:#101010">Wyjście końcowe / prywatne</div><div class="ab" style="left:184.50px;top:400.98px;width:29.00px;height:10.76px;background:#02a0b0"></div><div class="ab" style="left:213.50px;top:400.98px;width:28.70px;height:10.76px;background:#ffff00"></div><div class="ab" style="left:99.80px;top:400.98px;width:14.80px;height:10.76px;background:#f0f0f0"></div><div class="ab" style="left:99.80px;top:410.94px;width:84.70px;height:0.80px;background:#d6d6d6"></div><div class="ab" style="left:242.20px;top:410.94px;width:446.80px;height:0.80px;background:#d6d6d6"></div><div class="ab" style="left:184.50px;top:410.94px;width:57.70px;height:0.90px;background:rgba(255,255,255,.3)"></div><div class="t" style="left:114.60px;width:43.00px;text-align:center;top:403.78px;font-size:6.45px;color:#101010">2016-03-30</div><div class="t" style="left:157.60px;width:26.90px;text-align:center;top:403.78px;font-size:6.45px;color:#101010">13:49</div><div class="t" style="left:184.50px;width:29.00px;text-align:center;top:403.78px;font-size:6.45px;color:#101010;color:#0a2a2a">WY</div><div class="t" style="left:213.50px;width:28.70px;text-align:center;top:403.78px;font-size:6.45px;color:#101010">SŁ</div><div class="t" style="left:243.80px;top:403.78px;font-size:6.45px;color:#101010">Czytnik 1</div><div class="t" style="left:361.60px;width:45.80px;text-align:center;top:403.78px;font-size:6.45px;color:#101010">NIE</div><div class="t" style="left:409.00px;top:403.78px;font-size:6.45px;color:#101010">Wyjście służb. Do banku</div><div class="ab" style="left:184.50px;top:411.74px;width:29.00px;height:10.76px;background:#00f200"></div><div class="ab" style="left:213.50px;top:411.74px;width:28.70px;height:10.76px;background:#00f200"></div><div class="ab" style="left:99.80px;top:411.74px;width:14.80px;height:10.76px;background:#f0f0f0"></div><div class="ab" style="left:99.80px;top:421.70px;width:84.70px;height:0.80px;background:#d6d6d6"></div><div class="ab" style="left:242.20px;top:421.70px;width:446.80px;height:0.80px;background:#d6d6d6"></div><div class="ab" style="left:184.50px;top:421.70px;width:57.70px;height:0.90px;background:rgba(255,255,255,.3)"></div><div class="t" style="left:114.60px;width:43.00px;text-align:center;top:414.54px;font-size:6.45px;color:#101010">2016-03-30</div><div class="t" style="left:157.60px;width:26.90px;text-align:center;top:414.54px;font-size:6.45px;color:#101010">13:49</div><div class="t" style="left:184.50px;width:29.00px;text-align:center;top:414.54px;font-size:6.45px;color:#101010;color:#0a2a2a">WE</div><svg style="left:224.25px;top:415.54px" width="7.2" height="3.2" viewBox="0 0 7.2 3.2"><path d="M0 1.6 L2.8 0 L3.6 1.2 L4.4 0 L7.2 1.6 L4.4 3.2 L3.6 2 L2.8 3.2Z" fill="#008a00"/></svg><div class="t" style="left:243.80px;top:414.54px;font-size:6.45px;color:#101010">Czytnik 1</div><div class="t" style="left:361.60px;width:45.80px;text-align:center;top:414.54px;font-size:6.45px;color:#101010">NIE</div><div class="t" style="left:409.00px;top:414.54px;font-size:6.45px;color:#101010">Wyjście końcowe / prywatne</div><div class="ab" style="left:184.50px;top:422.50px;width:29.00px;height:10.76px;background:#02a0b0"></div><div class="ab" style="left:213.50px;top:422.50px;width:28.70px;height:10.76px;background:#00f200"></div><div class="ab" style="left:99.80px;top:422.50px;width:14.80px;height:10.76px;background:#f0f0f0"></div><div class="ab" style="left:99.80px;top:432.46px;width:84.70px;height:0.80px;background:#d6d6d6"></div><div class="ab" style="left:242.20px;top:432.46px;width:446.80px;height:0.80px;background:#d6d6d6"></div><div class="ab" style="left:184.50px;top:432.46px;width:57.70px;height:0.90px;background:rgba(255,255,255,.3)"></div><div class="t" style="left:114.60px;width:43.00px;text-align:center;top:425.30px;font-size:6.45px;color:#101010">2016-03-30</div><div class="t" style="left:157.60px;width:26.90px;text-align:center;top:425.30px;font-size:6.45px;color:#101010">13:38</div><div class="t" style="left:184.50px;width:29.00px;text-align:center;top:425.30px;font-size:6.45px;color:#101010;color:#0a2a2a">WY</div><svg style="left:224.25px;top:426.30px" width="7.2" height="3.2" viewBox="0 0 7.2 3.2"><path d="M0 1.6 L2.8 0 L3.6 1.2 L4.4 0 L7.2 1.6 L4.4 3.2 L3.6 2 L2.8 3.2Z" fill="#008a00"/></svg><div class="t" style="left:243.80px;top:425.30px;font-size:6.45px;color:#101010">Czytnik 1</div><div class="t" style="left:361.60px;width:45.80px;text-align:center;top:425.30px;font-size:6.45px;color:#101010">NIE</div><div class="t" style="left:409.00px;top:425.30px;font-size:6.45px;color:#101010">Wyjście końcowe / prywatne</div><div class="ab" style="left:184.50px;top:433.26px;width:29.00px;height:10.76px;background:#00f200"></div><div class="ab" style="left:213.50px;top:433.26px;width:28.70px;height:10.76px;background:#00f200"></div><div class="ab" style="left:99.80px;top:433.26px;width:14.80px;height:10.76px;background:#f0f0f0"></div><div class="ab" style="left:99.80px;top:443.22px;width:84.70px;height:0.80px;background:#d6d6d6"></div><div class="ab" style="left:242.20px;top:443.22px;width:446.80px;height:0.80px;background:#d6d6d6"></div><div class="ab" style="left:184.50px;top:443.22px;width:57.70px;height:0.90px;background:rgba(255,255,255,.3)"></div><div class="t" style="left:114.60px;width:43.00px;text-align:center;top:436.06px;font-size:6.45px;color:#101010">2016-03-30</div><div class="t" style="left:157.60px;width:26.90px;text-align:center;top:436.06px;font-size:6.45px;color:#101010">13:38</div><div class="t" style="left:184.50px;width:29.00px;text-align:center;top:436.06px;font-size:6.45px;color:#101010;color:#0a2a2a">WE</div><svg style="left:224.25px;top:437.06px" width="7.2" height="3.2" viewBox="0 0 7.2 3.2"><path d="M0 1.6 L2.8 0 L3.6 1.2 L4.4 0 L7.2 1.6 L4.4 3.2 L3.6 2 L2.8 3.2Z" fill="#008a00"/></svg><div class="t" style="left:243.80px;top:436.06px;font-size:6.45px;color:#101010">Czytnik 1</div><div class="t" style="left:361.60px;width:45.80px;text-align:center;top:436.06px;font-size:6.45px;color:#101010">NIE</div><div class="t" style="left:409.00px;top:436.06px;font-size:6.45px;color:#101010">Wyjście końcowe / prywatne</div><div class="ab" style="left:184.50px;top:444.02px;width:29.00px;height:10.76px;background:#02a0b0"></div><div class="ab" style="left:213.50px;top:444.02px;width:28.70px;height:10.76px;background:#00f200"></div><div class="ab" style="left:99.80px;top:444.02px;width:14.80px;height:10.76px;background:#f0f0f0"></div><div class="ab" style="left:99.80px;top:453.98px;width:84.70px;height:0.80px;background:#d6d6d6"></div><div class="ab" style="left:242.20px;top:453.98px;width:446.80px;height:0.80px;background:#d6d6d6"></div><div class="ab" style="left:184.50px;top:453.98px;width:57.70px;height:0.90px;background:rgba(255,255,255,.3)"></div><div class="t" style="left:114.60px;width:43.00px;text-align:center;top:446.82px;font-size:6.45px;color:#101010">2016-03-30</div><div class="t" style="left:157.60px;width:26.90px;text-align:center;top:446.82px;font-size:6.45px;color:#101010">13:30</div><div class="t" style="left:184.50px;width:29.00px;text-align:center;top:446.82px;font-size:6.45px;color:#101010;color:#0a2a2a">WY</div><svg style="left:224.25px;top:447.82px" width="7.2" height="3.2" viewBox="0 0 7.2 3.2"><path d="M0 1.6 L2.8 0 L3.6 1.2 L4.4 0 L7.2 1.6 L4.4 3.2 L3.6 2 L2.8 3.2Z" fill="#008a00"/></svg><div class="t" style="left:243.80px;top:446.82px;font-size:6.45px;color:#101010">Czytnik 1</div><div class="t" style="left:361.60px;width:45.80px;text-align:center;top:446.82px;font-size:6.45px;color:#101010">NIE</div><div class="t" style="left:409.00px;top:446.82px;font-size:6.45px;color:#101010">Wyjście końcowe / prywatne</div><div class="ab" style="left:184.50px;top:454.78px;width:29.00px;height:10.76px;background:#02a0b0"></div><div class="ab" style="left:213.50px;top:454.78px;width:28.70px;height:10.76px;background:#ffff00"></div><div class="ab" style="left:99.80px;top:454.78px;width:14.80px;height:10.76px;background:#f0f0f0"></div><div class="ab" style="left:99.80px;top:464.74px;width:84.70px;height:0.80px;background:#d6d6d6"></div><div class="ab" style="left:242.20px;top:464.74px;width:446.80px;height:0.80px;background:#d6d6d6"></div><div class="ab" style="left:184.50px;top:464.74px;width:57.70px;height:0.90px;background:rgba(255,255,255,.3)"></div><div class="t" style="left:114.60px;width:43.00px;text-align:center;top:457.58px;font-size:6.45px;color:#101010">2016-03-30</div><div class="t" style="left:157.60px;width:26.90px;text-align:center;top:457.58px;font-size:6.45px;color:#101010">13:30</div><div class="t" style="left:184.50px;width:29.00px;text-align:center;top:457.58px;font-size:6.45px;color:#101010;color:#0a2a2a">WY</div><div class="t" style="left:213.50px;width:28.70px;text-align:center;top:457.58px;font-size:6.45px;color:#101010">SŁ</div><div class="t" style="left:243.80px;top:457.58px;font-size:6.45px;color:#101010">Czytnik 1</div><div class="t" style="left:361.60px;width:45.80px;text-align:center;top:457.58px;font-size:6.45px;color:#101010">NIE</div><div class="t" style="left:409.00px;top:457.58px;font-size:6.45px;color:#101010">Wyjście służb. Do banku</div><div class="ab" style="left:184.50px;top:465.54px;width:29.00px;height:10.76px;background:#00f200"></div><div class="ab" style="left:213.50px;top:465.54px;width:28.70px;height:10.76px;background:#00f200"></div><div class="ab" style="left:99.80px;top:465.54px;width:14.80px;height:10.76px;background:#f0f0f0"></div><div class="ab" style="left:99.80px;top:475.50px;width:84.70px;height:0.80px;background:#d6d6d6"></div><div class="ab" style="left:242.20px;top:475.50px;width:446.80px;height:0.80px;background:#d6d6d6"></div><div class="ab" style="left:184.50px;top:475.50px;width:57.70px;height:0.90px;background:rgba(255,255,255,.3)"></div><div class="t" style="left:114.60px;width:43.00px;text-align:center;top:468.34px;font-size:6.45px;color:#101010">2016-03-30</div><div class="t" style="left:157.60px;width:26.90px;text-align:center;top:468.34px;font-size:6.45px;color:#101010">13:30</div><div class="t" style="left:184.50px;width:29.00px;text-align:center;top:468.34px;font-size:6.45px;color:#101010;color:#0a2a2a">WE</div><svg style="left:224.25px;top:469.34px" width="7.2" height="3.2" viewBox="0 0 7.2 3.2"><path d="M0 1.6 L2.8 0 L3.6 1.2 L4.4 0 L7.2 1.6 L4.4 3.2 L3.6 2 L2.8 3.2Z" fill="#008a00"/></svg><div class="t" style="left:243.80px;top:468.34px;font-size:6.45px;color:#101010">Czytnik 1</div><div class="t" style="left:361.60px;width:45.80px;text-align:center;top:468.34px;font-size:6.45px;color:#101010">NIE</div><div class="t" style="left:409.00px;top:468.34px;font-size:6.45px;color:#101010">Wyjście końcowe / prywatne</div><div class="ab" style="left:184.50px;top:476.30px;width:29.00px;height:10.76px;background:#02a0b0"></div><div class="ab" style="left:213.50px;top:476.30px;width:28.70px;height:10.76px;background:#00f200"></div><div class="ab" style="left:99.80px;top:476.30px;width:14.80px;height:10.76px;background:#f0f0f0"></div><div class="ab" style="left:99.80px;top:486.26px;width:84.70px;height:0.80px;background:#d6d6d6"></div><div class="ab" style="left:242.20px;top:486.26px;width:446.80px;height:0.80px;background:#d6d6d6"></div><div class="ab" style="left:184.50px;top:486.26px;width:57.70px;height:0.90px;background:rgba(255,255,255,.3)"></div><div class="t" style="left:114.60px;width:43.00px;text-align:center;top:479.10px;font-size:6.45px;color:#101010">2016-03-30</div><div class="t" style="left:157.60px;width:26.90px;text-align:center;top:479.10px;font-size:6.45px;color:#101010">13:29</div><div class="t" style="left:184.50px;width:29.00px;text-align:center;top:479.10px;font-size:6.45px;color:#101010;color:#0a2a2a">WY</div><svg style="left:224.25px;top:480.10px" width="7.2" height="3.2" viewBox="0 0 7.2 3.2"><path d="M0 1.6 L2.8 0 L3.6 1.2 L4.4 0 L7.2 1.6 L4.4 3.2 L3.6 2 L2.8 3.2Z" fill="#008a00"/></svg><div class="t" style="left:243.80px;top:479.10px;font-size:6.45px;color:#101010">Czytnik 1</div><div class="t" style="left:361.60px;width:45.80px;text-align:center;top:479.10px;font-size:6.45px;color:#101010">NIE</div><div class="t" style="left:409.00px;top:479.10px;font-size:6.45px;color:#101010">Wyjście końcowe / prywatne</div><div class="ab" style="left:184.50px;top:487.06px;width:29.00px;height:10.76px;background:#02a0b0"></div><div class="ab" style="left:213.50px;top:487.06px;width:28.70px;height:10.76px;background:#ffff00"></div><div class="ab" style="left:99.80px;top:487.06px;width:14.80px;height:10.76px;background:#f0f0f0"></div><div class="ab" style="left:99.80px;top:497.02px;width:84.70px;height:0.80px;background:#d6d6d6"></div><div class="ab" style="left:242.20px;top:497.02px;width:446.80px;height:0.80px;background:#d6d6d6"></div><div class="ab" style="left:184.50px;top:497.02px;width:57.70px;height:0.90px;background:rgba(255,255,255,.3)"></div><div class="t" style="left:114.60px;width:43.00px;text-align:center;top:489.86px;font-size:6.45px;color:#101010">2016-03-30</div><div class="t" style="left:157.60px;width:26.90px;text-align:center;top:489.86px;font-size:6.45px;color:#101010">13:29</div><div class="t" style="left:184.50px;width:29.00px;text-align:center;top:489.86px;font-size:6.45px;color:#101010;color:#0a2a2a">WY</div><div class="t" style="left:213.50px;width:28.70px;text-align:center;top:489.86px;font-size:6.45px;color:#101010">SŁ</div><div class="t" style="left:243.80px;top:489.86px;font-size:6.45px;color:#101010">Czytnik 1</div><div class="t" style="left:361.60px;width:45.80px;text-align:center;top:489.86px;font-size:6.45px;color:#101010">NIE</div><div class="t" style="left:409.00px;top:489.86px;font-size:6.45px;color:#101010">Wyjście służb. Do banku</div><div class="ab" style="left:184.50px;top:497.82px;width:29.00px;height:10.76px;background:#00f200"></div><div class="ab" style="left:213.50px;top:497.82px;width:28.70px;height:10.76px;background:#00f200"></div><div class="ab" style="left:99.80px;top:497.82px;width:14.80px;height:10.76px;background:#f0f0f0"></div><div class="ab" style="left:99.80px;top:507.78px;width:84.70px;height:0.80px;background:#d6d6d6"></div><div class="ab" style="left:242.20px;top:507.78px;width:446.80px;height:0.80px;background:#d6d6d6"></div><div class="ab" style="left:184.50px;top:507.78px;width:57.70px;height:0.90px;background:rgba(255,255,255,.3)"></div><div class="t" style="left:114.60px;width:43.00px;text-align:center;top:500.62px;font-size:6.45px;color:#101010">2016-03-30</div><div class="t" style="left:157.60px;width:26.90px;text-align:center;top:500.62px;font-size:6.45px;color:#101010">13:29</div><div class="t" style="left:184.50px;width:29.00px;text-align:center;top:500.62px;font-size:6.45px;color:#101010;color:#0a2a2a">WE</div><svg style="left:224.25px;top:501.62px" width="7.2" height="3.2" viewBox="0 0 7.2 3.2"><path d="M0 1.6 L2.8 0 L3.6 1.2 L4.4 0 L7.2 1.6 L4.4 3.2 L3.6 2 L2.8 3.2Z" fill="#008a00"/></svg><div class="t" style="left:243.80px;top:500.62px;font-size:6.45px;color:#101010">Czytnik 1</div><div class="t" style="left:361.60px;width:45.80px;text-align:center;top:500.62px;font-size:6.45px;color:#101010">NIE</div><div class="t" style="left:409.00px;top:500.62px;font-size:6.45px;color:#101010">Wyjście końcowe / prywatne</div><div class="ab" style="left:184.50px;top:508.58px;width:29.00px;height:10.76px;background:#02a0b0"></div><div class="ab" style="left:213.50px;top:508.58px;width:28.70px;height:10.76px;background:#00f200"></div><div class="ab" style="left:99.80px;top:508.58px;width:14.80px;height:10.76px;background:#f0f0f0"></div><div class="ab" style="left:99.80px;top:518.54px;width:84.70px;height:0.80px;background:#d6d6d6"></div><div class="ab" style="left:242.20px;top:518.54px;width:446.80px;height:0.80px;background:#d6d6d6"></div><div class="ab" style="left:184.50px;top:518.54px;width:57.70px;height:0.90px;background:rgba(255,255,255,.3)"></div><div class="t" style="left:114.60px;width:43.00px;text-align:center;top:511.38px;font-size:6.45px;color:#101010">2016-03-30</div><div class="t" style="left:157.60px;width:26.90px;text-align:center;top:511.38px;font-size:6.45px;color:#101010">13:28</div><div class="t" style="left:184.50px;width:29.00px;text-align:center;top:511.38px;font-size:6.45px;color:#101010;color:#0a2a2a">WY</div><svg style="left:224.25px;top:512.38px" width="7.2" height="3.2" viewBox="0 0 7.2 3.2"><path d="M0 1.6 L2.8 0 L3.6 1.2 L4.4 0 L7.2 1.6 L4.4 3.2 L3.6 2 L2.8 3.2Z" fill="#008a00"/></svg><div class="t" style="left:243.80px;top:511.38px;font-size:6.45px;color:#101010">Czytnik 1</div><div class="t" style="left:361.60px;width:45.80px;text-align:center;top:511.38px;font-size:6.45px;color:#101010">NIE</div><div class="t" style="left:409.00px;top:511.38px;font-size:6.45px;color:#101010">Wyjście końcowe / prywatne</div><div class="ab" style="left:184.50px;top:519.34px;width:29.00px;height:10.76px;background:#02a0b0"></div><div class="ab" style="left:213.50px;top:519.34px;width:28.70px;height:10.76px;background:#ffff00"></div><div class="ab" style="left:99.80px;top:519.34px;width:14.80px;height:10.76px;background:#f0f0f0"></div><div class="ab" style="left:99.80px;top:529.30px;width:84.70px;height:0.80px;background:#d6d6d6"></div><div class="ab" style="left:242.20px;top:529.30px;width:446.80px;height:0.80px;background:#d6d6d6"></div><div class="ab" style="left:184.50px;top:529.30px;width:57.70px;height:0.90px;background:rgba(255,255,255,.3)"></div><div class="t" style="left:114.60px;width:43.00px;text-align:center;top:522.14px;font-size:6.45px;color:#101010">2016-03-30</div><div class="t" style="left:157.60px;width:26.90px;text-align:center;top:522.14px;font-size:6.45px;color:#101010">13:28</div><div class="t" style="left:184.50px;width:29.00px;text-align:center;top:522.14px;font-size:6.45px;color:#101010;color:#0a2a2a">WY</div><div class="t" style="left:213.50px;width:28.70px;text-align:center;top:522.14px;font-size:6.45px;color:#101010">SŁ</div><div class="t" style="left:243.80px;top:522.14px;font-size:6.45px;color:#101010">Czytnik 1</div><div class="t" style="left:361.60px;width:45.80px;text-align:center;top:522.14px;font-size:6.45px;color:#101010">NIE</div><div class="t" style="left:409.00px;top:522.14px;font-size:6.45px;color:#101010">Wyjście służb. Do banku</div><div class="ab" style="left:184.50px;top:530.10px;width:29.00px;height:10.76px;background:#00f200"></div><div class="ab" style="left:213.50px;top:530.10px;width:28.70px;height:10.76px;background:#00f200"></div><div class="ab" style="left:99.80px;top:530.10px;width:14.80px;height:10.76px;background:#f0f0f0"></div><div class="ab" style="left:99.80px;top:540.06px;width:84.70px;height:0.80px;background:#d6d6d6"></div><div class="ab" style="left:242.20px;top:540.06px;width:446.80px;height:0.80px;background:#d6d6d6"></div><div class="ab" style="left:184.50px;top:540.06px;width:57.70px;height:0.90px;background:rgba(255,255,255,.3)"></div><div class="t" style="left:114.60px;width:43.00px;text-align:center;top:532.90px;font-size:6.45px;color:#101010">2016-03-30</div><div class="t" style="left:157.60px;width:26.90px;text-align:center;top:532.90px;font-size:6.45px;color:#101010">13:28</div><div class="t" style="left:184.50px;width:29.00px;text-align:center;top:532.90px;font-size:6.45px;color:#101010;color:#0a2a2a">WE</div><svg style="left:224.25px;top:533.90px" width="7.2" height="3.2" viewBox="0 0 7.2 3.2"><path d="M0 1.6 L2.8 0 L3.6 1.2 L4.4 0 L7.2 1.6 L4.4 3.2 L3.6 2 L2.8 3.2Z" fill="#008a00"/></svg><div class="t" style="left:243.80px;top:532.90px;font-size:6.45px;color:#101010">Czytnik 1</div><div class="t" style="left:361.60px;width:45.80px;text-align:center;top:532.90px;font-size:6.45px;color:#101010">NIE</div><div class="t" style="left:409.00px;top:532.90px;font-size:6.45px;color:#101010">Wyjście końcowe / prywatne</div><div class="ab" style="left:184.50px;top:540.86px;width:29.00px;height:10.76px;background:#02a0b0"></div><div class="ab" style="left:213.50px;top:540.86px;width:28.70px;height:10.76px;background:#00f200"></div><div class="ab" style="left:99.80px;top:540.86px;width:14.80px;height:10.76px;background:#f0f0f0"></div><div class="ab" style="left:99.80px;top:550.82px;width:84.70px;height:0.80px;background:#d6d6d6"></div><div class="ab" style="left:242.20px;top:550.82px;width:446.80px;height:0.80px;background:#d6d6d6"></div><div class="t" style="left:114.60px;width:43.00px;text-align:center;top:543.66px;font-size:6.45px;color:#101010">2016-03-30</div><div class="t" style="left:157.60px;width:26.90px;text-align:center;top:543.66px;font-size:6.45px;color:#101010">13:22</div><div class="t" style="left:184.50px;width:29.00px;text-align:center;top:543.66px;font-size:6.45px;color:#101010;color:#0a2a2a">WY</div><svg style="left:224.25px;top:544.66px" width="7.2" height="3.2" viewBox="0 0 7.2 3.2"><path d="M0 1.6 L2.8 0 L3.6 1.2 L4.4 0 L7.2 1.6 L4.4 3.2 L3.6 2 L2.8 3.2Z" fill="#008a00"/></svg><div class="t" style="left:243.80px;top:543.66px;font-size:6.45px;color:#101010">Czytnik 1</div><div class="t" style="left:361.60px;width:45.80px;text-align:center;top:543.66px;font-size:6.45px;color:#101010">NIE</div><div class="t" style="left:409.00px;top:543.66px;font-size:6.45px;color:#101010">Wyjście końcowe / prywatne</div><div class="ab" style="left:113.90px;top:358.00px;width:0.70px;height:193.00px;background:#d2d2d2"></div><div class="ab" style="left:156.90px;top:358.00px;width:0.70px;height:193.00px;background:#d2d2d2"></div><div class="ab" style="left:183.80px;top:358.00px;width:0.70px;height:10.70px;background:#d2d2d2"></div><div class="ab" style="left:183.80px;top:368.70px;width:0.80px;height:182.30px;background:rgba(255,255,255,.3)"></div><div class="ab" style="left:212.80px;top:358.00px;width:0.70px;height:10.70px;background:#d2d2d2"></div><div class="ab" style="left:212.80px;top:368.70px;width:0.80px;height:182.30px;background:rgba(255,255,255,.3)"></div><div class="ab" style="left:241.50px;top:358.00px;width:0.70px;height:10.70px;background:#d2d2d2"></div><div class="ab" style="left:241.50px;top:368.70px;width:0.80px;height:182.30px;background:#d2d2d2"></div><div class="ab" style="left:360.90px;top:358.00px;width:0.70px;height:193.00px;background:#d2d2d2"></div><div class="ab" style="left:406.70px;top:358.00px;width:0.70px;height:193.00px;background:#d2d2d2"></div><div class="ab" style="left:688.30px;top:358.00px;width:0.70px;height:193.00px;background:#d2d2d2"></div><div class="ab" style="left:689.00px;top:338.50px;width:13.00px;height:212.50px;background:#eaeaea;border-left:0.7px solid #dcdcdc"></div><svg style="left:693.5px;top:342px" width="4" height="3" viewBox="0 0 4 3"><path d="M0 3 L2 0 L4 3Z" fill="#303030"/></svg><svg style="left:693.5px;top:545.5px" width="4" height="3" viewBox="0 0 4 3"><path d="M0 0 L2 3 L4 0Z" fill="#303030"/></svg><div class="ab" style="left:690.00px;top:349.60px;width:10.00px;height:8.40px;background:linear-gradient(90deg,#f6f6f6,#d8d8d8);border:0.7px solid #a8a8a8;border-radius:1px"></div><div class="ab" style="left:702.30px;top:338.60px;width:135.30px;height:212.40px;background:#808080"></div><div class="t" style="left:708.50px;top:343.00px;font-size:5.8px;color:#f0f0f0">PODGLĄD ZDARZEŃ Z KAMERY</div><div class="ab" style="left:792.00px;top:352.50px;width:45.20px;height:198.50px;background:#eeeeee"></div><div class="ab" style="left:95.60px;top:551.00px;width:744.60px;height:12.70px;background:#808080"></div><div class="ab" style="left:95.60px;top:551.00px;width:286.40px;height:12.70px;background:#f0f0f0"></div><div class="ab" style="left:95.60px;top:551.00px;width:72.70px;height:12.00px;background:#f0f0f0"></div><div class="t" style="left:104.60px;top:554.90px;font-size:6.4px;color:#1a1a1a">Korekcja zdarzeń</div><div class="ab" style="left:168.30px;top:551.00px;width:70.60px;height:12.00px;background:#ededed;border-top:1.3px solid #a2a2a2;border-left:0.8px solid #fdfdfd;border-right:1px solid #707070;border-bottom:1.2px solid #8c8c8c"></div><div class="t" style="left:176.00px;top:554.90px;font-size:6.4px;color:#1a1a1a">Wejście - wyjście</div><div class="ab" style="left:238.90px;top:551.00px;width:71.60px;height:12.00px;background:#ededed;border-top:1.3px solid #a2a2a2;border-left:0.8px solid #fdfdfd;border-right:1px solid #707070;border-bottom:1.2px solid #8c8c8c"></div><div class="t" style="left:249.00px;top:554.90px;font-size:6.4px;color:#1a1a1a">Podgląd rcp</div><div class="ab" style="left:310.50px;top:551.00px;width:71.50px;height:12.00px;background:#ededed;border-top:1.3px solid #a2a2a2;border-left:0.8px solid #fdfdfd;border-right:1px solid #707070;border-bottom:1.2px solid #8c8c8c"></div><div class="t" style="left:319.00px;top:554.90px;font-size:6.4px;color:#1a1a1a">KD &amp; RCP</div><div class="ab" style="left:168.10px;top:551.50px;width:1.00px;height:11.50px;background:#6a6a6a"></div><div class="ab" style="left:95.40px;top:563.50px;width:744.80px;height:17.30px;background:#808080"></div><div class="ab" style="left:100.30px;top:568.60px;width:138.60px;height:10.20px;border:1px solid #d4d4d4;border-right-color:#c4c4c4;border-bottom-color:#c4c4c4"></div><div class="t" style="left:104.60px;top:571.30px;font-size:6.6px;color:#fafafa">filtr włączony: 2016-03-01 - 2016-03-31</div><div class="ab" style="left:824.50px;top:567.50px;width:13.20px;height:11.50px;background:#f4f4f4;border:0.6px solid #c0c0c0"></div><svg style="left:826px;top:568.5px" width="11" height="10" viewBox="0 0 11 10"><path d="M0.5 0.8 H8 L5 4.5 V8.5 L3.5 7.5 V4.5 Z" fill="#1a2a3a"/><path d="M2 1.5 H6.5 L4.5 4Z" fill="#4a9aba"/><rect x="8.6" y="2" width="1.3" height="7" fill="#d040d0"/></svg><svg style="left:97.80px;top:47.30px" width="10.40" height="9.60" viewBox="0 0 16 16" preserveAspectRatio="none"><path d="M1.5 4 L6 2 L11 4 L6.5 9Z" fill="#fff" stroke="#707070" stroke-width="0.9"/>
<path d="M0.8 7.5 L0.8 15 L12.5 15 L15.5 9 L5 9 L3.5 7.5Z" fill="#8e8e1e" stroke="#3c3c06" stroke-width="1"/>
<path d="M12 0.3 L15.5 3.5 L12 6.8 L8.7 3.5Z" fill="#12d012" stroke="#0a7a0a" stroke-width="0.7"/></svg><svg style="left:118.40px;top:50.20px" width="8.40" height="5.80" viewBox="0 0 16 16" preserveAspectRatio="none"><path d="M2.5 13 Q2 6.5 7.5 6.5 Q11 6.5 12 9.5" fill="none" stroke="#1a2aa8" stroke-width="2"/><path d="M9 9.5 L15 8.5 L13.5 14Z" fill="#1a2aa8"/></svg><svg style="left:136.00px;top:47.30px" width="10.40" height="9.60" viewBox="0 0 16 16" preserveAspectRatio="none"><path d="M1.5 4 L6 2 L11 4 L6.5 9Z" fill="#fff" stroke="#707070" stroke-width="0.9"/>
<path d="M0.8 7.5 L0.8 15 L12.5 15 L15.5 9 L5 9 L3.5 7.5Z" fill="#8e8e1e" stroke="#3c3c06" stroke-width="1"/>
<path d="M9 2 Q12 0 15.5 2 L15 4 Q12 5.5 9 4Z" fill="#c81010" stroke="#600" stroke-width="0.5"/><path d="M10 4 V8" stroke="#333" stroke-width="0.9"/></svg><svg style="left:160.00px;top:48.20px" width="10.20" height="9.80" viewBox="0 0 16 16" preserveAspectRatio="none"><path d="M1 3 L8 5 L15 3 L15 14 L8 15.5 L1 14Z" fill="#40a0b0" stroke="#1a4a5a" stroke-width="0.9"/>
<path d="M2.5 3.5 L7.5 5.2 L7.5 14 L2.5 12.5Z" fill="#fff"/><path d="M8.5 5.2 L13.5 3.5 L13.5 12.5 L8.5 14Z" fill="#e8f4f8"/>
<circle cx="5" cy="9.5" r="2.6" fill="#e0b070" stroke="#6a4a20" stroke-width="0.7"/><circle cx="5" cy="14" r="2" fill="#806040"/>
<circle cx="3.5" cy="1.8" r="1.5" fill="#222"/></svg><svg style="left:179.70px;top:48.50px" width="9.60" height="8.50" viewBox="0 0 16 16" preserveAspectRatio="none"><rect x="1" y="9" width="2.5" height="6" fill="#2020e0"/><rect x="4.5" y="6" width="2.5" height="9" fill="#2828e8"/>
<rect x="8" y="4" width="2.5" height="11" fill="#2020e0"/><rect x="11.5" y="7" width="2.5" height="8" fill="#2828e8"/>
<rect x="8" y="3" width="2.5" height="2" fill="#e02020"/><rect x="4.5" y="5" width="2.5" height="1.5" fill="#e02020"/>
<path d="M0.5 1 L5 4" stroke="#111" stroke-width="1.4"/><path d="M3 4.5 L6 4.8 L5 2Z" fill="#111"/></svg><svg style="left:198.70px;top:48.00px" width="10.30" height="9.50" viewBox="0 0 16 16" preserveAspectRatio="none"><path d="M13 6 Q11 1 6 2.5 Q3 3.5 2.5 6" fill="none" stroke="#2040c0" stroke-width="1.8"/><path d="M0 4.5 L5 5 L2 9Z" fill="#2040c0"/>
<path d="M14.5 6.5 L7 14 L5 15.5 L5.5 13 L13 5.5Z" fill="#e8d040" stroke="#303010" stroke-width="0.9"/></svg><svg style="left:217.60px;top:48.50px" width="10.20" height="9.50" viewBox="0 0 16 16" preserveAspectRatio="none"><path d="M1 4 L6 0.8 L9 3 L7 5Z" fill="#181818"/><path d="M5 4 L11 11" stroke="#202020" stroke-width="2"/>
<path d="M15.5 7 L9 14 L7 15.5 L7.5 13 L14 6Z" fill="#d8d040" stroke="#303010" stroke-width="0.9"/></svg><svg style="left:236.80px;top:48.20px" width="9.60" height="9.80" viewBox="0 0 16 16" preserveAspectRatio="none"><circle cx="8" cy="8" r="6.3" fill="#fff" stroke="#b01818" stroke-width="2.4"/><path d="M5 8 H11 M5 8 L7 6 M5 8 L7 10" stroke="#d08080" stroke-width="0.9" fill="none"/></svg><svg style="left:259.70px;top:48.00px" width="8.50" height="10.20" viewBox="0 0 16 16" preserveAspectRatio="none"><path d="M6 1 Q11 0.5 11 4 Q13 6 11 8.5 Q13 11 11 14 Q8 16 5 14.5 L7 12 L4 9.5 L7 8 L4 5.5 L6.5 4Z" fill="#e8e020" stroke="#606010" stroke-width="1"/></svg><svg style="left:277.50px;top:48.50px" width="10.50" height="9.00" viewBox="0 0 16 16" preserveAspectRatio="none"><path d="M4 1 L13 1 L12 6 L3 6Z" fill="#e8e8e8" stroke="#505050" stroke-width="0.9"/>
<path d="M1 6 L15 6 L15 12 Q8 15 1 12Z" fill="#8a8a8a" stroke="#3a3a3a" stroke-width="1"/><rect x="3.5" y="9" width="9" height="1.8" fill="#f0f0f0"/></svg><svg style="left:301.30px;top:47.80px" width="10.70" height="10.50" viewBox="0 0 16 16" preserveAspectRatio="none"><circle cx="8" cy="8" r="6.6" fill="#2050a8" stroke="#10306a" stroke-width="0.8"/><circle cx="8" cy="8" r="4.2" fill="#e8eef6"/>
<path d="M7 8.5 L13 8 L14.5 12 L9.5 13.5Z" fill="#e01010"/></svg><svg style="left:320.60px;top:47.80px" width="10.60" height="10.50" viewBox="0 0 16 16" preserveAspectRatio="none"><circle cx="8" cy="8" r="6.6" fill="#2050a8" stroke="#10306a" stroke-width="0.8"/><circle cx="8" cy="8" r="4.2" fill="#b0b0d0"/>
<path d="M1.5 10 L8 8.5 L7 12 Z" fill="#e010a0"/><path d="M8 4 L11 7" stroke="#fff" stroke-width="1"/></svg><svg style="left:339.50px;top:47.80px" width="10.70" height="10.50" viewBox="0 0 16 16" preserveAspectRatio="none"><circle cx="8" cy="8" r="6.6" fill="#2050a8" stroke="#10306a" stroke-width="0.8"/><circle cx="8" cy="8" r="4.2" fill="#e8eef6"/>
<path d="M7 8.5 L13 8 L14.5 12 L9.5 13.5Z" fill="#e01010"/></svg><svg style="left:358.00px;top:48.00px" width="11.40" height="10.80" viewBox="0 0 16 16" preserveAspectRatio="none"><circle cx="8" cy="8" r="6.8" fill="#fafafa" stroke="#505050" stroke-width="1.3"/><path d="M8 3.5 V8.5 L11 10" fill="none" stroke="#303030" stroke-width="1.1"/></svg><svg style="left:382.00px;top:48.00px" width="11.40" height="10.60" viewBox="0 0 16 16" preserveAspectRatio="none"><circle cx="8" cy="8" r="6.4" fill="#fafafa" stroke="#b01010" stroke-width="2.2"/><path d="M5 6 L11 10.5" stroke="#505050" stroke-width="1.2"/><path d="M6 10 L10.5 6" stroke="#909090" stroke-width="1"/></svg><svg style="left:400.60px;top:46.30px" width="10.40" height="11.20" viewBox="0 0 16 16" preserveAspectRatio="none"><rect x="1" y="6" width="14" height="3.5" fill="#fff" stroke="#303030" stroke-width="0.9"/><rect x="2.5" y="6" width="2.5" height="3.5" fill="#222"/><rect x="8" y="6" width="2.5" height="3.5" fill="#222"/>
<rect x="1.5" y="9.5" width="2" height="6" fill="#303030"/><rect x="12.5" y="9.5" width="2" height="6" fill="#303030"/><circle cx="12.5" cy="3" r="2.2" fill="#e8e040"/></svg><svg style="left:426.40px;top:48.50px" width="10.10" height="9.50" viewBox="0 0 16 16" preserveAspectRatio="none"><defs><linearGradient id="gq" x1="0" x2="1"><stop offset="0" stop-color="#40d040"/><stop offset="0.5" stop-color="#30b0c0"/><stop offset="1" stop-color="#2080e0"/></linearGradient></defs><rect x="0.5" y="0.5" width="15" height="15" rx="1.5" fill="url(#gq)" stroke="#7ab070" stroke-width="0.6"/></svg><svg style="left:453.70px;top:48.00px" width="10.50" height="10.00" viewBox="0 0 16 16" preserveAspectRatio="none"><path d="M1 10 L9 1 L15.5 6 L7 15.5Z" fill="#8a2a9a" stroke="#401050" stroke-width="1"/><path d="M1.5 11 L7 15.5" stroke="#e0c0e0" stroke-width="1.2"/><path d="M8 6 L10 5 L10.5 8" fill="none" stroke="#f0a0a0" stroke-width="1"/></svg><svg style="left:479.50px;top:48.80px" width="6.30" height="8.50" viewBox="0 0 16 16" preserveAspectRatio="none"><path d="M6.5 1 H9.5 L9 10 H7Z" fill="#b01010"/><rect x="6.8" y="12" width="2.4" height="2.6" fill="#b01010"/></svg><svg style="left:497.50px;top:48.80px" width="8.50" height="8.50" viewBox="0 0 16 16" preserveAspectRatio="none"><path d="M2.5 1 H6.5 L6 10 H3Z" fill="#b01010"/><rect x="3" y="12" width="3" height="2.6" fill="#b01010"/><path d="M9.5 1 H13.5 L13 10 H10Z" fill="#b01010"/><rect x="10" y="12" width="3" height="2.6" fill="#b01010"/></svg><svg style="left:515.50px;top:48.80px" width="11.00" height="9.40" viewBox="0 0 16 16" preserveAspectRatio="none"><circle cx="9" cy="7" r="4.2" fill="#fff" stroke="#2a8a90" stroke-width="1.4"/><path d="M12 10 L15 14" stroke="#2a9aa0" stroke-width="2"/><path d="M0.5 7 H6 M3.5 4 L6.5 7 L3.5 10" stroke="#101010" stroke-width="1.8" fill="none"/></svg><svg style="left:533.00px;top:46.50px" width="11.50" height="11.00" viewBox="0 0 16 16" preserveAspectRatio="none"><path d="M5 1 L13 1 L13 14 L5 14Z" fill="#505050" stroke="#202020" stroke-width="0.9"/><path d="M8 2 L12 1.5 L12 13.5 L8 14Z" fill="#8a8a8a"/><rect x="1" y="11" width="12" height="3.5" fill="#303030"/><circle cx="4" cy="5" r="2.5" fill="#d01010"/></svg><svg style="left:558.70px;top:48.50px" width="9.50" height="9.70" viewBox="0 0 16 16" preserveAspectRatio="none"><path d="M4.5 7 V4.5 Q4.5 1 8 1 Q11.5 1 11.5 4.5 V7" fill="none" stroke="#404040" stroke-width="1.5"/><rect x="2.5" y="7" width="11" height="8" rx="1" fill="#fafafa" stroke="#404040" stroke-width="1.4"/><rect x="7.3" y="9.5" width="1.4" height="3" fill="#303030"/></svg><svg style="left:443px;top:52px" width="4" height="2.5" viewBox="0 0 4 2.5"><path d="M0 0 H4 L2 2.5Z" fill="#202020"/></svg><div class="ab" style="left:151.90px;top:46.00px;width:0.90px;height:15.00px;background:#a0a0a0"></div><div class="ab" style="left:152.80px;top:46.00px;width:0.70px;height:15.00px;background:#ffffff"></div><div class="ab" style="left:251.80px;top:46.00px;width:0.90px;height:15.00px;background:#a0a0a0"></div><div class="ab" style="left:252.70px;top:46.00px;width:0.70px;height:15.00px;background:#ffffff"></div><div class="ab" style="left:293.20px;top:46.00px;width:0.90px;height:15.00px;background:#a0a0a0"></div><div class="ab" style="left:294.10px;top:46.00px;width:0.70px;height:15.00px;background:#ffffff"></div><div class="ab" style="left:374.80px;top:46.00px;width:0.90px;height:15.00px;background:#a0a0a0"></div><div class="ab" style="left:375.70px;top:46.00px;width:0.70px;height:15.00px;background:#ffffff"></div><div class="ab" style="left:417.90px;top:46.00px;width:0.90px;height:15.00px;background:#a0a0a0"></div><div class="ab" style="left:418.80px;top:46.00px;width:0.70px;height:15.00px;background:#ffffff"></div><div class="ab" style="left:469.40px;top:46.00px;width:0.90px;height:15.00px;background:#a0a0a0"></div><div class="ab" style="left:470.30px;top:46.00px;width:0.70px;height:15.00px;background:#ffffff"></div><div class="ab" style="left:550.40px;top:46.00px;width:0.90px;height:15.00px;background:#a0a0a0"></div><div class="ab" style="left:551.30px;top:46.00px;width:0.70px;height:15.00px;background:#ffffff"></div><div class="ab" style="left:574.40px;top:46.00px;width:0.90px;height:15.00px;background:#a0a0a0"></div><div class="ab" style="left:575.30px;top:46.00px;width:0.70px;height:15.00px;background:#ffffff"></div><svg style="left:99.60px;top:319.80px" width="10.90" height="10.00" viewBox="0 0 16 16" preserveAspectRatio="none"><path d="M1.5 4 L6 2 L11 4 L6.5 9Z" fill="#fff" stroke="#707070" stroke-width="0.9"/>
<path d="M0.8 7.5 L0.8 15 L12.5 15 L15.5 9 L5 9 L3.5 7.5Z" fill="#8e8e1e" stroke="#3c3c06" stroke-width="1"/>
<path d="M12 0.3 L15.5 3.5 L12 6.8 L8.7 3.5Z" fill="#12d012" stroke="#0a7a0a" stroke-width="0.7"/></svg><svg style="left:120.20px;top:322.20px" width="8.70" height="5.80" viewBox="0 0 16 16" preserveAspectRatio="none"><path d="M2.5 13 Q2 6.5 7.5 6.5 Q11 6.5 12 9.5" fill="none" stroke="#1a2aa8" stroke-width="2"/><path d="M9 9.5 L15 8.5 L13.5 14Z" fill="#1a2aa8"/></svg><svg style="left:138.30px;top:319.80px" width="10.50" height="10.00" viewBox="0 0 16 16" preserveAspectRatio="none"><path d="M1.5 4 L6 2 L11 4 L6.5 9Z" fill="#fff" stroke="#707070" stroke-width="0.9"/>
<path d="M0.8 7.5 L0.8 15 L12.5 15 L15.5 9 L5 9 L3.5 7.5Z" fill="#8e8e1e" stroke="#3c3c06" stroke-width="1"/>
<path d="M9 2 Q12 0 15.5 2 L15 4 Q12 5.5 9 4Z" fill="#c81010" stroke="#600" stroke-width="0.5"/><path d="M10 4 V8" stroke="#333" stroke-width="0.9"/></svg><svg style="left:157.80px;top:321.50px" width="11.00" height="7.80" viewBox="0 0 16 16" preserveAspectRatio="none"><path d="M1 6 H4.5 V2.5 H7.5 V6 H11 V9 H7.5 V12.5 H4.5 V9 H1Z" fill="#108010" stroke="#064006" stroke-width="0.8"/><path d="M13 2 H15.5 L15 10 H13.5Z" fill="#202020"/><rect x="13.3" y="12" width="2" height="2.6" fill="#202020"/></svg><svg style="left:177.00px;top:321.50px" width="10.60" height="7.80" viewBox="0 0 16 16" preserveAspectRatio="none"><path d="M1 2.5 L10 13.5 M10 2.5 L1 13.5" stroke="#a81010" stroke-width="2.4"/><path d="M12.5 2 H15.5 L15 10 H13Z" fill="#202020"/><rect x="13" y="12" width="2.3" height="2.6" fill="#202020"/></svg><svg style="left:197.00px;top:320.80px" width="9.60" height="9.40" viewBox="0 0 16 16" preserveAspectRatio="none"><path d="M3 6 Q4 2 8 2 Q12 2 13 6" fill="none" stroke="#c01818" stroke-width="1.6"/><path d="M13 10 Q12 14 8 14 Q4 14 3 10" fill="none" stroke="#c01818" stroke-width="1.6"/><path d="M5 5 L3 8 L1 5Z" fill="#c01818"/><path d="M11 11 L13 8 L15 11Z" fill="#c01818"/><path d="M3 6 V10 M13 6 V10" stroke="#c01818" stroke-width="1.4"/></svg><svg style="left:215.30px;top:321.20px" width="10.10" height="9.00" viewBox="0 0 16 16" preserveAspectRatio="none"><rect x="0.5" y="6" width="5" height="4" fill="#2040a0" stroke="#101850" stroke-width="0.8"/><rect x="10" y="1" width="5" height="4" fill="#2040a0" stroke="#101850" stroke-width="0.8"/><rect x="10" y="11" width="5" height="4" fill="#2040a0" stroke="#101850" stroke-width="0.8"/><path d="M5.5 8 H8 V3 H10 M8 8 V13 H10" fill="none" stroke="#1a2a60" stroke-width="1"/></svg><svg style="left:235.20px;top:321.30px" width="8.40" height="9.00" viewBox="0 0 16 16" preserveAspectRatio="none"><path d="M3 2 Q8 0 13 2 L13 9 Q11 14 8 15 Q5 14 3 9Z" fill="#f4f4f4" stroke="#888" stroke-width="1.1"/><path d="M9 7 L11 10 L9 12" fill="none" stroke="#30a040" stroke-width="1.2"/></svg><svg style="left:253.20px;top:320.80px" width="10.60" height="9.70" viewBox="0 0 16 16" preserveAspectRatio="none"><rect x="0.5" y="0.5" width="8" height="8" fill="#c8c020" stroke="#404010" stroke-width="0.8"/><rect x="1.5" y="2" width="4" height="3" fill="#202020"/><rect x="6" y="6" width="9" height="9" fill="#fff" stroke="#707070" stroke-width="0.9"/><path d="M9 9 L14 13" stroke="#e02020" stroke-width="1.4"/><rect x="4" y="8" width="3" height="3" fill="#2a8a2a"/></svg><svg style="left:272.30px;top:321.30px" width="10.30" height="8.90" viewBox="0 0 16 16" preserveAspectRatio="none"><path d="M4 1 L13 1 L12 6 L3 6Z" fill="#e8e8e8" stroke="#505050" stroke-width="0.9"/>
<path d="M1 6 L15 6 L15 12 Q8 15 1 12Z" fill="#8a8a8a" stroke="#3a3a3a" stroke-width="1"/><rect x="3.5" y="9" width="9" height="1.8" fill="#f0f0f0"/></svg><svg style="left:291.40px;top:320.80px" width="9.90" height="9.50" viewBox="0 0 16 16" preserveAspectRatio="none"><path d="M1 15 L1 3 L12 15Z" fill="#189aa0" stroke="#0a3a3a" stroke-width="0.8"/><rect x="0.5" y="13.5" width="15" height="2.2" fill="#383838"/><path d="M15 2 L8 10 L6.5 11 L7 9.5 L14 1Z" fill="#d8c840" stroke="#202010" stroke-width="0.9"/></svg><svg style="left:311.80px;top:322.00px" width="8.00" height="7.30" viewBox="0 0 16 16" preserveAspectRatio="none"><rect x="1" y="1" width="14" height="2" fill="#181818"/><path d="M8 5 L14.5 13 H1.5Z" fill="#a81010"/></svg><svg style="left:331.00px;top:322.00px" width="7.90" height="7.30" viewBox="0 0 16 16" preserveAspectRatio="none"><path d="M1.5 3 H14.5 L8 11Z" fill="#a81010"/><rect x="1" y="13" width="14" height="2" fill="#181818"/></svg><svg style="left:348.80px;top:320.80px" width="10.40" height="9.50" viewBox="0 0 16 16" preserveAspectRatio="none"><path d="M1 10 L9 1 L15.5 6 L7 15.5Z" fill="#8a2a9a" stroke="#401050" stroke-width="1"/><path d="M1.5 11 L7 15.5" stroke="#e0c0e0" stroke-width="1.2"/><path d="M8 6 L10 5 L10.5 8" fill="none" stroke="#f0a0a0" stroke-width="1"/></svg><svg style="left:367.50px;top:320.30px" width="11.80" height="10.70" viewBox="0 0 16 16" preserveAspectRatio="none"><rect x="0.5" y="0.5" width="10" height="12" fill="#fff" stroke="#c0a0a0" stroke-width="0.7"/><circle cx="3" cy="3" r="1.2" fill="#e0a0d0"/><circle cx="7" cy="3" r="1.2" fill="#a0c0e0"/><circle cx="3" cy="7" r="1.2" fill="#e0e0a0"/><circle cx="3" cy="10.5" r="1.2" fill="#e09090"/>
<rect x="6" y="7" width="9.5" height="8.5" rx="1" fill="#f0f0f0" stroke="#404040" stroke-width="1.3"/><rect x="8" y="10" width="5" height="2" fill="#505050"/><circle cx="11" cy="5" r="1.5" fill="#50a050"/></svg><svg style="left:386.60px;top:321.50px" width="10.70" height="7.70" viewBox="0 0 16 16" preserveAspectRatio="none"><rect x="3" y="5" width="9" height="9" fill="#f8f8f8" stroke="#303030" stroke-width="1.5"/><path d="M12 7.5 L15.5 5 V14 L12 11.5Z" fill="#303030"/><path d="M0.5 3 L3 1.5 L6 3" stroke="#303030" stroke-width="1.3" fill="none"/><rect x="5" y="8" width="3" height="2" fill="#606060"/></svg><svg style="left:406.80px;top:321.80px" width="9.70" height="7.70" viewBox="0 0 16 16" preserveAspectRatio="none"><rect x="5" y="1" width="10" height="1.7" fill="#303030"/><rect x="7" y="5" width="8" height="1.7" fill="#303030"/><rect x="7" y="9" width="8" height="1.7" fill="#303030"/><rect x="5" y="13" width="10" height="1.7" fill="#303030"/>
<circle cx="2" cy="7" r="1.6" fill="#2040b0"/><rect x="4.5" y="2.5" width="1.2" height="12" fill="#505050"/></svg><svg style="left:797.40px;top:67.20px" width="8.80" height="8.80" viewBox="0 0 16 16" preserveAspectRatio="none"><path d="M0.8 1.5 H15 L9.5 8 V14.5 L6.5 12.5 V8 Z" fill="#fff" stroke="#1a2a3a" stroke-width="1.6"/></svg><svg style="left:812.50px;top:67.00px" width="10.10" height="9.50" viewBox="0 0 16 16" preserveAspectRatio="none"><path d="M0.5 1 H12 L7.5 6.5 V14 L4.8 12.5 V6.5Z" fill="#1a2a3a"/><path d="M3 2.2 H9.5 L6.5 5.5Z" fill="#3aa0c0"/><rect x="12.6" y="6" width="1.8" height="9" fill="#d040d0"/><rect x="9" y="1" width="6" height="1.6" fill="#d040d0"/></svg><svg style="left:828.00px;top:67.00px" width="10.20" height="9.30" viewBox="0 0 16 16" preserveAspectRatio="none"><path d="M1 15 L1 3 L12 15Z" fill="#189aa0" stroke="#0a3a3a" stroke-width="0.8"/><rect x="0.5" y="13.5" width="15" height="2.2" fill="#383838"/><path d="M15 2 L8 10 L6.5 11 L7 9.5 L14 1Z" fill="#d8c840" stroke="#202010" stroke-width="0.9"/></svg></body></html>
